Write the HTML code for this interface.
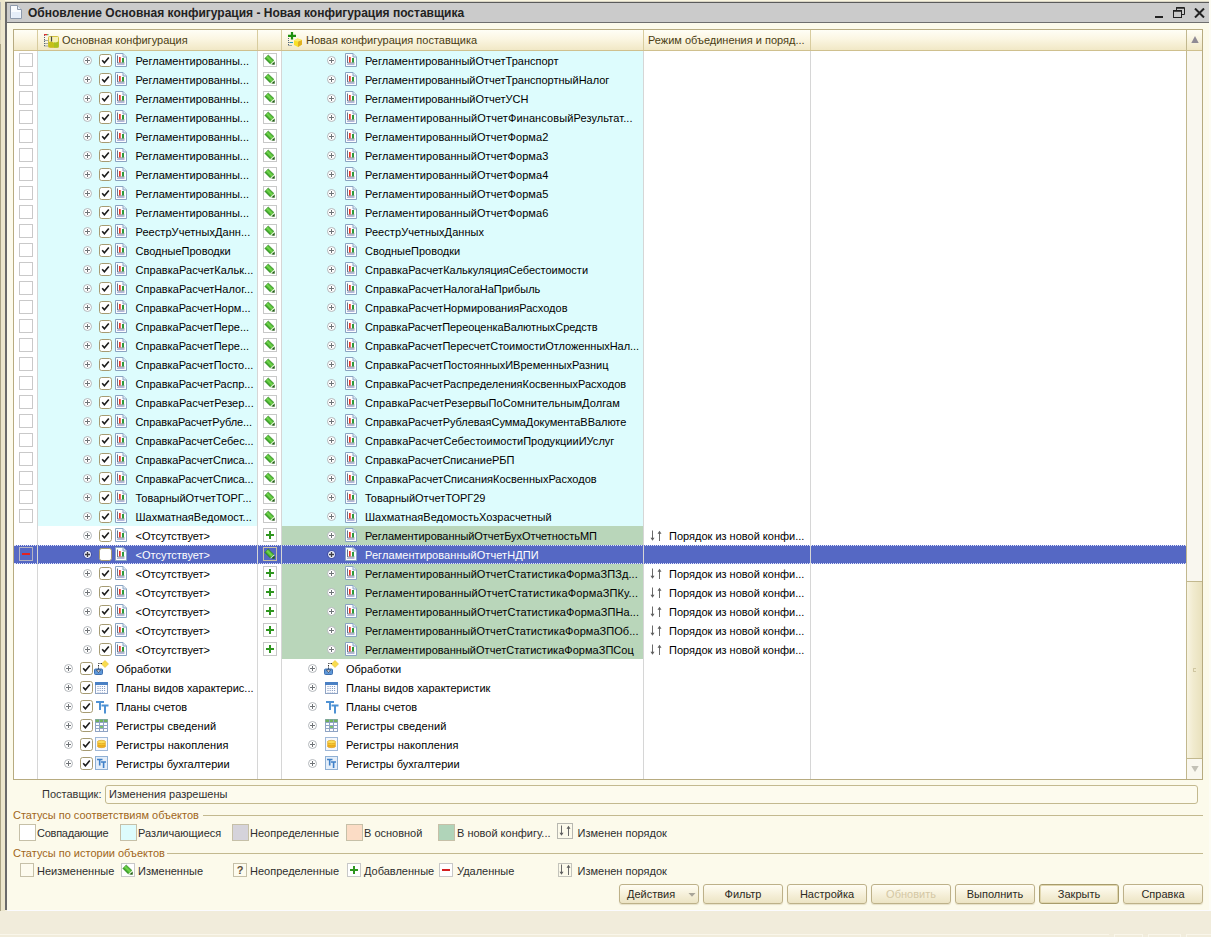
<!DOCTYPE html>
<html lang="ru"><head><meta charset="utf-8"><title>Обновление Основная конфигурация - Новая конфигурация поставщика</title>
<style>
html,body{margin:0;padding:0}
body{width:1211px;height:937px;overflow:hidden;position:relative;background:#f1ecdb;font-family:"Liberation Sans",sans-serif;font-size:11px;color:#000}
.a{position:absolute;display:block;line-height:0}
.a svg{display:block}
#lstrip{position:absolute;left:0;top:0;width:5px;height:911px;background:#ece6cc}
#lstrip2{position:absolute;left:0;top:2px;width:1px;height:909px;background:linear-gradient(#bcbcb8 0,#bcbcb8 18px,#dcd6bc 18px,#dcd6bc 42px,#aaa384 42px)}
#topstrip{position:absolute;left:0;top:0;width:1211px;height:3px;background:#f8f4df}
#win{position:absolute;left:5px;top:3px;width:1204px;height:907px;background:#fcfaeb;border-left:2px solid #6a6a6a;box-sizing:border-box}
#winb{position:absolute;left:7px;top:910px;width:1204px;height:1px;background:#fbfbff}
#rstrip{position:absolute;left:1209px;top:0;width:2px;height:911px;background:#fdfcf4}
#title{position:absolute;left:5px;top:2px;width:1204px;height:21px;background:#cbcbcb;border-top:1px solid #5a5a5a;border-bottom:1px solid #6e6e6e;border-left:2px solid #5a5a5a;border-left-color:#6a6a6a;box-sizing:border-box;box-shadow:0 -1px 0 #d8d4c4}
#title .tt{position:absolute;left:21px;top:1px;line-height:18px;font-size:12px;font-weight:bold;color:#222;white-space:nowrap}
#tbl{position:absolute;left:13px;top:29px;width:1190px;height:751px;border:1px solid #b7ab80;box-sizing:border-box;background:#fff}
#hdr{position:absolute;left:14px;top:30px;width:1172px;height:20px;background:linear-gradient(#fffef6,#fbf6e2 45%,#f1e8c6);border-bottom:1px solid #cfc08e}
.hs{position:absolute;top:30px;width:1px;height:20px;background:#d8cc9e}
.vs{position:absolute;top:51px;width:1px;height:728px;background:#d6d6d6}
.ht{position:absolute;top:30px;line-height:20px;color:#4a3d12;white-space:nowrap}
.bg{position:absolute;height:19px}
.blue{background:#ddfcfd}
.green{background:#b9d6ba}
.selbg{position:absolute;left:14px;width:1172px;height:19px;background:#5568c4;box-sizing:border-box;border-top:1px dotted #dfe4ff;border-bottom:1px dotted #dfe4ff}
.fbox{position:absolute;left:19px;width:14px;height:14px;box-sizing:border-box;border:1px solid #c9c9c9;background:#fff}
.t{position:absolute;line-height:19px;white-space:nowrap;color:#000;margin-top:1px}
.t.w{color:#fff}
#sb{position:absolute;left:1186px;top:30px;width:16px;height:749px;background:#f9f7ef;border-left:1px solid #c2b88e;box-sizing:border-box}
#sbup{position:absolute;left:1186px;top:30px;width:16px;height:21px;border-left:1px solid #c2b88e;border-bottom:1px solid #cfc08e;box-sizing:border-box;background:linear-gradient(#fffef6,#f1e8c6)}
#thumb{position:absolute;left:1187px;top:581px;width:15px;height:178px;background:linear-gradient(90deg,#f8f4e2,#f1ebcf 40%,#e9e1bd);border-top:1px solid #c2b88e;border-bottom:1px solid #c2b88e;box-sizing:border-box}
.lbl{position:absolute;white-space:nowrap;line-height:14px;color:#2e2e2e}
.grp{color:#a0661a}
.hl{position:absolute;height:1px;background:#c3b98f}
.lb{position:absolute;width:17px;height:17px;box-sizing:border-box;border:1px solid #c6c0a8}
.btn{position:absolute;top:884px;height:20px;box-sizing:border-box;border:1px solid #bdb189;border-radius:3px;background:linear-gradient(#fffdf3,#f5efd8 55%,#ece4c4);text-align:center;line-height:18px;color:#2c2a22;box-shadow:0 1px 1px #e6e0c8}
</style></head><body>
<svg width="0" height="0" style="position:absolute;left:0;top:0"><defs><linearGradient id="pg" x1="0" y1="1" x2="1" y2="0"><stop offset="0" stop-color="#1e6a10"/><stop offset="0.32" stop-color="#2f981f"/><stop offset="0.52" stop-color="#78dc50"/><stop offset="0.72" stop-color="#2f981f"/><stop offset="1" stop-color="#1e6a10"/></linearGradient></defs></svg><div id="topstrip"></div><div id="lstrip"></div><div id="lstrip2"></div><div id="rstrip"></div>
<div id="win"></div><div id="winb"></div>
<div id="title"><span class="a" style="left:3px;top:2px"><svg width="12" height="14" viewBox="0 0 12 14"><path d="M0.500 0.500h7l4 4v9h-11z" fill="#fafcff" stroke="#8e9aac"/><path d="M7.500 0.500v4h4" fill="#e4ecf6" stroke="#8e9aac"/><path d="M1.500 7h9v6h-9z" fill="#e6eef9"/></svg></span><span class="tt">Обновление Основная конфигурация - Новая конфигурация поставщика</span>
<i style="position:absolute;left:1148px;top:13px;width:8px;height:2px;background:#222"></i>
<svg style="position:absolute;left:1166px;top:4px" width="12" height="12" viewBox="0 0 12 12"><path d="M3.500 3.500v-3h8v7h-3" fill="none" stroke="#222"/><path d="M3 1h8" stroke="#222" stroke-width="1.500"/><rect x="0.500" y="3.500" width="8" height="7" fill="#cbcbcb" stroke="#222"/><path d="M0 4h9" stroke="#222" stroke-width="1.500"/></svg>
<svg style="position:absolute;left:1187px;top:5px" width="11" height="10" viewBox="0 0 11 10"><path d="M1 0.500l9 9M10 0.500l-9 9" stroke="#222" stroke-width="2"/></svg>
</div>
<div id="tbl"></div>
<div id="hdr"></div>
<div class="hs" style="left:37px"></div><div class="hs" style="left:257px"></div><div class="hs" style="left:281px"></div><div class="hs" style="left:643px"></div><div class="hs" style="left:810px"></div>
<span class="a" style="left:44px;top:32px"><svg width="16" height="16" viewBox="0 0 16 16"><path d="M0.500 3v11M0.500 8.500h3M0.500 11.500h3M0.500 14h3" stroke="#55667a" stroke-dasharray="1 1" fill="none"/><rect x="0" y="2" width="3" height="1.300" fill="#e03030"/><rect x="3" y="2.200" width="1.500" height="1" fill="#30a050"/><rect x="4.500" y="4.500" width="10" height="11" rx="1" fill="#f6f0b4" stroke="#d0c040"/><path d="M4.500 10.500c2-1.500 3-1 5 0s3 0 5-1v5.500h-10z" fill="#c4c018"/><path d="M10 10.200c2 0.800 3-0.200 4.500-0.700v6h-4.500z" fill="#a8c020"/><path d="M7.500 4.500v5" stroke="#444" stroke-width="1.200"/></svg></span><span class="ht" style="left:62px">Основная конфигурация</span>
<span class="a" style="left:287px;top:31px"><svg width="16" height="16" viewBox="0 0 16 16"><path d="M1.500 7v8M1.500 11.500h4M1.500 14.500h4" stroke="#55667a" stroke-dasharray="1 1" fill="none"/><path d="M3 11.500h3" stroke="#2098b0"/><path d="M1 4.900h8M5 1v7.500" stroke="#1e9010" stroke-width="2.200"/><path d="M7 9.500l3.500-2l4.500 1.500v4.500l-4 2.500l-4-2z" fill="#f8e028"/><path d="M11 10.500l4-1.500v4.500l-4 2.500z" fill="#e0b020"/><path d="M7 9.500l3.500-2l4.500 1.500l-4 1.500z" fill="#fbec70"/></svg></span><span class="ht" style="left:306px">Новая конфигурация поставщика</span>
<span class="ht" style="left:648px">Режим объединения и поряд...</span>
<div class="bg blue" style="top:51px;left:38px;width:219px"></div>
<div class="bg blue" style="top:51px;left:282px;width:361px"></div>
<div class="fbox" style="top:53px"></div>
<span class="a" style="left:82px;top:55px"><svg class="exp" width="11" height="11" viewBox="0 0 11 11"><circle cx="5.5" cy="5.5" r="4" fill="#fff" stroke="#b4b8bc" stroke-width="1"/><path d="M3 5.5h5M5.5 3v5" stroke="#707478" stroke-width="1"/></svg></span>
<span class="a" style="left:99px;top:54px"><svg class="chk" width="13" height="13" viewBox="0 0 13 13"><rect x="0.5" y="0.5" width="12" height="12" rx="2.2" ry="2.2" fill="#fff" stroke="#a69b72"/><path d="M3.2 6.2l2.2 2.600l4.400-5.200" fill="none" stroke="#1a1a1a" stroke-width="1.600"/></svg></span>
<span class="a" style="left:115px;top:53px"><svg class="ico" width="12" height="14" viewBox="0 0 12 14"><path d="M0.5 0.5h7.5l3.500 3.500v9.500h-11z" fill="#fcfdff" stroke="#8aa4c2"/><path d="M8 0.500v3.500h3.500" fill="#dfe8f2" stroke="#8aa4c2"/><path d="M2.500 2.500v7.500h7" fill="none" stroke="#66748c"/><rect x="4" y="4" width="1.700" height="5.500" fill="#ea3a2a"/><rect x="7" y="5" width="2" height="4.500" fill="#2f9a3a"/><path d="M2 11.500h7.500" stroke="#b4b6dc"/></svg></span>
<span class="t L" style="left:135.5px;top:51px">Регламентированны...</span>
<span class="a" style="left:263px;top:53px"><svg class="st" width="14" height="14" viewBox="0 0 14 14"><rect x="0.5" y="0.5" width="13" height="13" fill="#fff" stroke="#c8c8c8"/><path d="M5.200 1.900L11 7.500L7.300 11L1.800 5.400z" fill="url(#pg)" stroke="#2a7a18" stroke-width="0.5"/><path d="M11 7.500l0.700 0.700l-3.800 3.400l-0.600-0.600z" fill="#dcf8c8"/><path d="M11.700 8.600v3.200l-3.400-0.200z" fill="#1e5a10"/></svg></span>
<span class="a" style="left:326px;top:55px"><svg class="exp" width="11" height="11" viewBox="0 0 11 11"><circle cx="5.5" cy="5.5" r="4" fill="#fff" stroke="#b4b8bc" stroke-width="1"/><path d="M3 5.5h5M5.5 3v5" stroke="#707478" stroke-width="1"/></svg></span>
<span class="a" style="left:345px;top:53px"><svg class="ico" width="12" height="14" viewBox="0 0 12 14"><path d="M0.5 0.5h7.5l3.500 3.500v9.500h-11z" fill="#fcfdff" stroke="#8aa4c2"/><path d="M8 0.500v3.500h3.500" fill="#dfe8f2" stroke="#8aa4c2"/><path d="M2.500 2.500v7.500h7" fill="none" stroke="#66748c"/><rect x="4" y="4" width="1.700" height="5.500" fill="#ea3a2a"/><rect x="7" y="5" width="2" height="4.500" fill="#2f9a3a"/><path d="M2 11.500h7.500" stroke="#b4b6dc"/></svg></span>
<span class="t R" style="left:365px;top:51px">РегламентированныйОтчетТранспорт</span>
<div class="bg blue" style="top:70px;left:38px;width:219px"></div>
<div class="bg blue" style="top:70px;left:282px;width:361px"></div>
<div class="fbox" style="top:72px"></div>
<span class="a" style="left:82px;top:74px"><svg class="exp" width="11" height="11" viewBox="0 0 11 11"><circle cx="5.5" cy="5.5" r="4" fill="#fff" stroke="#b4b8bc" stroke-width="1"/><path d="M3 5.5h5M5.5 3v5" stroke="#707478" stroke-width="1"/></svg></span>
<span class="a" style="left:99px;top:73px"><svg class="chk" width="13" height="13" viewBox="0 0 13 13"><rect x="0.5" y="0.5" width="12" height="12" rx="2.2" ry="2.2" fill="#fff" stroke="#a69b72"/><path d="M3.2 6.2l2.2 2.600l4.400-5.200" fill="none" stroke="#1a1a1a" stroke-width="1.600"/></svg></span>
<span class="a" style="left:115px;top:72px"><svg class="ico" width="12" height="14" viewBox="0 0 12 14"><path d="M0.5 0.5h7.5l3.500 3.500v9.500h-11z" fill="#fcfdff" stroke="#8aa4c2"/><path d="M8 0.500v3.500h3.500" fill="#dfe8f2" stroke="#8aa4c2"/><path d="M2.500 2.500v7.500h7" fill="none" stroke="#66748c"/><rect x="4" y="4" width="1.700" height="5.500" fill="#ea3a2a"/><rect x="7" y="5" width="2" height="4.500" fill="#2f9a3a"/><path d="M2 11.500h7.500" stroke="#b4b6dc"/></svg></span>
<span class="t L" style="left:135.5px;top:70px">Регламентированны...</span>
<span class="a" style="left:263px;top:72px"><svg class="st" width="14" height="14" viewBox="0 0 14 14"><rect x="0.5" y="0.5" width="13" height="13" fill="#fff" stroke="#c8c8c8"/><path d="M5.200 1.900L11 7.500L7.300 11L1.800 5.400z" fill="url(#pg)" stroke="#2a7a18" stroke-width="0.5"/><path d="M11 7.500l0.700 0.700l-3.800 3.400l-0.600-0.600z" fill="#dcf8c8"/><path d="M11.700 8.600v3.200l-3.400-0.200z" fill="#1e5a10"/></svg></span>
<span class="a" style="left:326px;top:74px"><svg class="exp" width="11" height="11" viewBox="0 0 11 11"><circle cx="5.5" cy="5.5" r="4" fill="#fff" stroke="#b4b8bc" stroke-width="1"/><path d="M3 5.5h5M5.5 3v5" stroke="#707478" stroke-width="1"/></svg></span>
<span class="a" style="left:345px;top:72px"><svg class="ico" width="12" height="14" viewBox="0 0 12 14"><path d="M0.5 0.5h7.5l3.500 3.500v9.500h-11z" fill="#fcfdff" stroke="#8aa4c2"/><path d="M8 0.500v3.500h3.500" fill="#dfe8f2" stroke="#8aa4c2"/><path d="M2.500 2.500v7.500h7" fill="none" stroke="#66748c"/><rect x="4" y="4" width="1.700" height="5.500" fill="#ea3a2a"/><rect x="7" y="5" width="2" height="4.500" fill="#2f9a3a"/><path d="M2 11.500h7.500" stroke="#b4b6dc"/></svg></span>
<span class="t R" style="left:365px;top:70px">РегламентированныйОтчетТранспортныйНалог</span>
<div class="bg blue" style="top:89px;left:38px;width:219px"></div>
<div class="bg blue" style="top:89px;left:282px;width:361px"></div>
<div class="fbox" style="top:91px"></div>
<span class="a" style="left:82px;top:93px"><svg class="exp" width="11" height="11" viewBox="0 0 11 11"><circle cx="5.5" cy="5.5" r="4" fill="#fff" stroke="#b4b8bc" stroke-width="1"/><path d="M3 5.5h5M5.5 3v5" stroke="#707478" stroke-width="1"/></svg></span>
<span class="a" style="left:99px;top:92px"><svg class="chk" width="13" height="13" viewBox="0 0 13 13"><rect x="0.5" y="0.5" width="12" height="12" rx="2.2" ry="2.2" fill="#fff" stroke="#a69b72"/><path d="M3.2 6.2l2.2 2.600l4.400-5.200" fill="none" stroke="#1a1a1a" stroke-width="1.600"/></svg></span>
<span class="a" style="left:115px;top:91px"><svg class="ico" width="12" height="14" viewBox="0 0 12 14"><path d="M0.5 0.5h7.5l3.500 3.500v9.500h-11z" fill="#fcfdff" stroke="#8aa4c2"/><path d="M8 0.500v3.500h3.500" fill="#dfe8f2" stroke="#8aa4c2"/><path d="M2.500 2.500v7.500h7" fill="none" stroke="#66748c"/><rect x="4" y="4" width="1.700" height="5.500" fill="#ea3a2a"/><rect x="7" y="5" width="2" height="4.500" fill="#2f9a3a"/><path d="M2 11.500h7.500" stroke="#b4b6dc"/></svg></span>
<span class="t L" style="left:135.5px;top:89px">Регламентированны...</span>
<span class="a" style="left:263px;top:91px"><svg class="st" width="14" height="14" viewBox="0 0 14 14"><rect x="0.5" y="0.5" width="13" height="13" fill="#fff" stroke="#c8c8c8"/><path d="M5.200 1.900L11 7.500L7.300 11L1.800 5.400z" fill="url(#pg)" stroke="#2a7a18" stroke-width="0.5"/><path d="M11 7.500l0.700 0.700l-3.800 3.400l-0.600-0.600z" fill="#dcf8c8"/><path d="M11.700 8.600v3.200l-3.400-0.200z" fill="#1e5a10"/></svg></span>
<span class="a" style="left:326px;top:93px"><svg class="exp" width="11" height="11" viewBox="0 0 11 11"><circle cx="5.5" cy="5.5" r="4" fill="#fff" stroke="#b4b8bc" stroke-width="1"/><path d="M3 5.5h5M5.5 3v5" stroke="#707478" stroke-width="1"/></svg></span>
<span class="a" style="left:345px;top:91px"><svg class="ico" width="12" height="14" viewBox="0 0 12 14"><path d="M0.5 0.5h7.5l3.500 3.500v9.500h-11z" fill="#fcfdff" stroke="#8aa4c2"/><path d="M8 0.500v3.500h3.500" fill="#dfe8f2" stroke="#8aa4c2"/><path d="M2.500 2.500v7.500h7" fill="none" stroke="#66748c"/><rect x="4" y="4" width="1.700" height="5.500" fill="#ea3a2a"/><rect x="7" y="5" width="2" height="4.500" fill="#2f9a3a"/><path d="M2 11.500h7.500" stroke="#b4b6dc"/></svg></span>
<span class="t R" style="left:365px;top:89px">РегламентированныйОтчетУСН</span>
<div class="bg blue" style="top:108px;left:38px;width:219px"></div>
<div class="bg blue" style="top:108px;left:282px;width:361px"></div>
<div class="fbox" style="top:110px"></div>
<span class="a" style="left:82px;top:112px"><svg class="exp" width="11" height="11" viewBox="0 0 11 11"><circle cx="5.5" cy="5.5" r="4" fill="#fff" stroke="#b4b8bc" stroke-width="1"/><path d="M3 5.5h5M5.5 3v5" stroke="#707478" stroke-width="1"/></svg></span>
<span class="a" style="left:99px;top:111px"><svg class="chk" width="13" height="13" viewBox="0 0 13 13"><rect x="0.5" y="0.5" width="12" height="12" rx="2.2" ry="2.2" fill="#fff" stroke="#a69b72"/><path d="M3.2 6.2l2.2 2.600l4.400-5.200" fill="none" stroke="#1a1a1a" stroke-width="1.600"/></svg></span>
<span class="a" style="left:115px;top:110px"><svg class="ico" width="12" height="14" viewBox="0 0 12 14"><path d="M0.5 0.5h7.5l3.500 3.500v9.500h-11z" fill="#fcfdff" stroke="#8aa4c2"/><path d="M8 0.500v3.500h3.500" fill="#dfe8f2" stroke="#8aa4c2"/><path d="M2.500 2.500v7.500h7" fill="none" stroke="#66748c"/><rect x="4" y="4" width="1.700" height="5.500" fill="#ea3a2a"/><rect x="7" y="5" width="2" height="4.500" fill="#2f9a3a"/><path d="M2 11.500h7.500" stroke="#b4b6dc"/></svg></span>
<span class="t L" style="left:135.5px;top:108px">Регламентированны...</span>
<span class="a" style="left:263px;top:110px"><svg class="st" width="14" height="14" viewBox="0 0 14 14"><rect x="0.5" y="0.5" width="13" height="13" fill="#fff" stroke="#c8c8c8"/><path d="M5.200 1.900L11 7.500L7.300 11L1.800 5.400z" fill="url(#pg)" stroke="#2a7a18" stroke-width="0.5"/><path d="M11 7.500l0.700 0.700l-3.800 3.400l-0.600-0.600z" fill="#dcf8c8"/><path d="M11.700 8.600v3.200l-3.400-0.200z" fill="#1e5a10"/></svg></span>
<span class="a" style="left:326px;top:112px"><svg class="exp" width="11" height="11" viewBox="0 0 11 11"><circle cx="5.5" cy="5.5" r="4" fill="#fff" stroke="#b4b8bc" stroke-width="1"/><path d="M3 5.5h5M5.5 3v5" stroke="#707478" stroke-width="1"/></svg></span>
<span class="a" style="left:345px;top:110px"><svg class="ico" width="12" height="14" viewBox="0 0 12 14"><path d="M0.5 0.5h7.5l3.500 3.500v9.500h-11z" fill="#fcfdff" stroke="#8aa4c2"/><path d="M8 0.500v3.500h3.500" fill="#dfe8f2" stroke="#8aa4c2"/><path d="M2.500 2.500v7.500h7" fill="none" stroke="#66748c"/><rect x="4" y="4" width="1.700" height="5.500" fill="#ea3a2a"/><rect x="7" y="5" width="2" height="4.500" fill="#2f9a3a"/><path d="M2 11.500h7.500" stroke="#b4b6dc"/></svg></span>
<span class="t R" style="left:365px;top:108px;letter-spacing:0.104px">РегламентированныйОтчетФинансовыйРезультат...</span>
<div class="bg blue" style="top:127px;left:38px;width:219px"></div>
<div class="bg blue" style="top:127px;left:282px;width:361px"></div>
<div class="fbox" style="top:129px"></div>
<span class="a" style="left:82px;top:131px"><svg class="exp" width="11" height="11" viewBox="0 0 11 11"><circle cx="5.5" cy="5.5" r="4" fill="#fff" stroke="#b4b8bc" stroke-width="1"/><path d="M3 5.5h5M5.5 3v5" stroke="#707478" stroke-width="1"/></svg></span>
<span class="a" style="left:99px;top:130px"><svg class="chk" width="13" height="13" viewBox="0 0 13 13"><rect x="0.5" y="0.5" width="12" height="12" rx="2.2" ry="2.2" fill="#fff" stroke="#a69b72"/><path d="M3.2 6.2l2.2 2.600l4.400-5.200" fill="none" stroke="#1a1a1a" stroke-width="1.600"/></svg></span>
<span class="a" style="left:115px;top:129px"><svg class="ico" width="12" height="14" viewBox="0 0 12 14"><path d="M0.5 0.5h7.5l3.500 3.500v9.500h-11z" fill="#fcfdff" stroke="#8aa4c2"/><path d="M8 0.500v3.500h3.500" fill="#dfe8f2" stroke="#8aa4c2"/><path d="M2.500 2.500v7.500h7" fill="none" stroke="#66748c"/><rect x="4" y="4" width="1.700" height="5.500" fill="#ea3a2a"/><rect x="7" y="5" width="2" height="4.500" fill="#2f9a3a"/><path d="M2 11.500h7.500" stroke="#b4b6dc"/></svg></span>
<span class="t L" style="left:135.5px;top:127px">Регламентированны...</span>
<span class="a" style="left:263px;top:129px"><svg class="st" width="14" height="14" viewBox="0 0 14 14"><rect x="0.5" y="0.5" width="13" height="13" fill="#fff" stroke="#c8c8c8"/><path d="M5.200 1.900L11 7.500L7.300 11L1.800 5.400z" fill="url(#pg)" stroke="#2a7a18" stroke-width="0.5"/><path d="M11 7.500l0.700 0.700l-3.800 3.400l-0.600-0.600z" fill="#dcf8c8"/><path d="M11.700 8.600v3.200l-3.400-0.200z" fill="#1e5a10"/></svg></span>
<span class="a" style="left:326px;top:131px"><svg class="exp" width="11" height="11" viewBox="0 0 11 11"><circle cx="5.5" cy="5.5" r="4" fill="#fff" stroke="#b4b8bc" stroke-width="1"/><path d="M3 5.5h5M5.5 3v5" stroke="#707478" stroke-width="1"/></svg></span>
<span class="a" style="left:345px;top:129px"><svg class="ico" width="12" height="14" viewBox="0 0 12 14"><path d="M0.5 0.5h7.5l3.500 3.500v9.500h-11z" fill="#fcfdff" stroke="#8aa4c2"/><path d="M8 0.500v3.500h3.500" fill="#dfe8f2" stroke="#8aa4c2"/><path d="M2.500 2.500v7.500h7" fill="none" stroke="#66748c"/><rect x="4" y="4" width="1.700" height="5.500" fill="#ea3a2a"/><rect x="7" y="5" width="2" height="4.500" fill="#2f9a3a"/><path d="M2 11.500h7.500" stroke="#b4b6dc"/></svg></span>
<span class="t R" style="left:365px;top:127px;letter-spacing:0.083px">РегламентированныйОтчетФорма2</span>
<div class="bg blue" style="top:146px;left:38px;width:219px"></div>
<div class="bg blue" style="top:146px;left:282px;width:361px"></div>
<div class="fbox" style="top:148px"></div>
<span class="a" style="left:82px;top:150px"><svg class="exp" width="11" height="11" viewBox="0 0 11 11"><circle cx="5.5" cy="5.5" r="4" fill="#fff" stroke="#b4b8bc" stroke-width="1"/><path d="M3 5.5h5M5.5 3v5" stroke="#707478" stroke-width="1"/></svg></span>
<span class="a" style="left:99px;top:149px"><svg class="chk" width="13" height="13" viewBox="0 0 13 13"><rect x="0.5" y="0.5" width="12" height="12" rx="2.2" ry="2.2" fill="#fff" stroke="#a69b72"/><path d="M3.2 6.2l2.2 2.600l4.400-5.200" fill="none" stroke="#1a1a1a" stroke-width="1.600"/></svg></span>
<span class="a" style="left:115px;top:148px"><svg class="ico" width="12" height="14" viewBox="0 0 12 14"><path d="M0.5 0.5h7.5l3.500 3.500v9.500h-11z" fill="#fcfdff" stroke="#8aa4c2"/><path d="M8 0.500v3.500h3.500" fill="#dfe8f2" stroke="#8aa4c2"/><path d="M2.500 2.500v7.500h7" fill="none" stroke="#66748c"/><rect x="4" y="4" width="1.700" height="5.500" fill="#ea3a2a"/><rect x="7" y="5" width="2" height="4.500" fill="#2f9a3a"/><path d="M2 11.500h7.500" stroke="#b4b6dc"/></svg></span>
<span class="t L" style="left:135.5px;top:146px">Регламентированны...</span>
<span class="a" style="left:263px;top:148px"><svg class="st" width="14" height="14" viewBox="0 0 14 14"><rect x="0.5" y="0.5" width="13" height="13" fill="#fff" stroke="#c8c8c8"/><path d="M5.200 1.900L11 7.500L7.300 11L1.800 5.400z" fill="url(#pg)" stroke="#2a7a18" stroke-width="0.5"/><path d="M11 7.500l0.700 0.700l-3.800 3.400l-0.600-0.600z" fill="#dcf8c8"/><path d="M11.700 8.600v3.200l-3.400-0.200z" fill="#1e5a10"/></svg></span>
<span class="a" style="left:326px;top:150px"><svg class="exp" width="11" height="11" viewBox="0 0 11 11"><circle cx="5.5" cy="5.5" r="4" fill="#fff" stroke="#b4b8bc" stroke-width="1"/><path d="M3 5.5h5M5.5 3v5" stroke="#707478" stroke-width="1"/></svg></span>
<span class="a" style="left:345px;top:148px"><svg class="ico" width="12" height="14" viewBox="0 0 12 14"><path d="M0.5 0.5h7.5l3.500 3.500v9.500h-11z" fill="#fcfdff" stroke="#8aa4c2"/><path d="M8 0.500v3.500h3.500" fill="#dfe8f2" stroke="#8aa4c2"/><path d="M2.500 2.500v7.500h7" fill="none" stroke="#66748c"/><rect x="4" y="4" width="1.700" height="5.500" fill="#ea3a2a"/><rect x="7" y="5" width="2" height="4.500" fill="#2f9a3a"/><path d="M2 11.500h7.500" stroke="#b4b6dc"/></svg></span>
<span class="t R" style="left:365px;top:146px;letter-spacing:0.083px">РегламентированныйОтчетФорма3</span>
<div class="bg blue" style="top:165px;left:38px;width:219px"></div>
<div class="bg blue" style="top:165px;left:282px;width:361px"></div>
<div class="fbox" style="top:167px"></div>
<span class="a" style="left:82px;top:169px"><svg class="exp" width="11" height="11" viewBox="0 0 11 11"><circle cx="5.5" cy="5.5" r="4" fill="#fff" stroke="#b4b8bc" stroke-width="1"/><path d="M3 5.5h5M5.5 3v5" stroke="#707478" stroke-width="1"/></svg></span>
<span class="a" style="left:99px;top:168px"><svg class="chk" width="13" height="13" viewBox="0 0 13 13"><rect x="0.5" y="0.5" width="12" height="12" rx="2.2" ry="2.2" fill="#fff" stroke="#a69b72"/><path d="M3.2 6.2l2.2 2.600l4.400-5.200" fill="none" stroke="#1a1a1a" stroke-width="1.600"/></svg></span>
<span class="a" style="left:115px;top:167px"><svg class="ico" width="12" height="14" viewBox="0 0 12 14"><path d="M0.5 0.5h7.5l3.500 3.500v9.500h-11z" fill="#fcfdff" stroke="#8aa4c2"/><path d="M8 0.500v3.500h3.500" fill="#dfe8f2" stroke="#8aa4c2"/><path d="M2.500 2.500v7.500h7" fill="none" stroke="#66748c"/><rect x="4" y="4" width="1.700" height="5.500" fill="#ea3a2a"/><rect x="7" y="5" width="2" height="4.500" fill="#2f9a3a"/><path d="M2 11.500h7.500" stroke="#b4b6dc"/></svg></span>
<span class="t L" style="left:135.5px;top:165px">Регламентированны...</span>
<span class="a" style="left:263px;top:167px"><svg class="st" width="14" height="14" viewBox="0 0 14 14"><rect x="0.5" y="0.5" width="13" height="13" fill="#fff" stroke="#c8c8c8"/><path d="M5.200 1.900L11 7.500L7.300 11L1.800 5.400z" fill="url(#pg)" stroke="#2a7a18" stroke-width="0.5"/><path d="M11 7.500l0.700 0.700l-3.800 3.400l-0.600-0.600z" fill="#dcf8c8"/><path d="M11.700 8.600v3.200l-3.400-0.200z" fill="#1e5a10"/></svg></span>
<span class="a" style="left:326px;top:169px"><svg class="exp" width="11" height="11" viewBox="0 0 11 11"><circle cx="5.5" cy="5.5" r="4" fill="#fff" stroke="#b4b8bc" stroke-width="1"/><path d="M3 5.5h5M5.5 3v5" stroke="#707478" stroke-width="1"/></svg></span>
<span class="a" style="left:345px;top:167px"><svg class="ico" width="12" height="14" viewBox="0 0 12 14"><path d="M0.5 0.5h7.5l3.500 3.500v9.500h-11z" fill="#fcfdff" stroke="#8aa4c2"/><path d="M8 0.500v3.500h3.500" fill="#dfe8f2" stroke="#8aa4c2"/><path d="M2.500 2.500v7.500h7" fill="none" stroke="#66748c"/><rect x="4" y="4" width="1.700" height="5.500" fill="#ea3a2a"/><rect x="7" y="5" width="2" height="4.500" fill="#2f9a3a"/><path d="M2 11.500h7.500" stroke="#b4b6dc"/></svg></span>
<span class="t R" style="left:365px;top:165px;letter-spacing:0.083px">РегламентированныйОтчетФорма4</span>
<div class="bg blue" style="top:184px;left:38px;width:219px"></div>
<div class="bg blue" style="top:184px;left:282px;width:361px"></div>
<div class="fbox" style="top:186px"></div>
<span class="a" style="left:82px;top:188px"><svg class="exp" width="11" height="11" viewBox="0 0 11 11"><circle cx="5.5" cy="5.5" r="4" fill="#fff" stroke="#b4b8bc" stroke-width="1"/><path d="M3 5.5h5M5.5 3v5" stroke="#707478" stroke-width="1"/></svg></span>
<span class="a" style="left:99px;top:187px"><svg class="chk" width="13" height="13" viewBox="0 0 13 13"><rect x="0.5" y="0.5" width="12" height="12" rx="2.2" ry="2.2" fill="#fff" stroke="#a69b72"/><path d="M3.2 6.2l2.2 2.600l4.400-5.200" fill="none" stroke="#1a1a1a" stroke-width="1.600"/></svg></span>
<span class="a" style="left:115px;top:186px"><svg class="ico" width="12" height="14" viewBox="0 0 12 14"><path d="M0.5 0.5h7.5l3.500 3.500v9.500h-11z" fill="#fcfdff" stroke="#8aa4c2"/><path d="M8 0.500v3.500h3.500" fill="#dfe8f2" stroke="#8aa4c2"/><path d="M2.500 2.500v7.500h7" fill="none" stroke="#66748c"/><rect x="4" y="4" width="1.700" height="5.500" fill="#ea3a2a"/><rect x="7" y="5" width="2" height="4.500" fill="#2f9a3a"/><path d="M2 11.500h7.500" stroke="#b4b6dc"/></svg></span>
<span class="t L" style="left:135.5px;top:184px">Регламентированны...</span>
<span class="a" style="left:263px;top:186px"><svg class="st" width="14" height="14" viewBox="0 0 14 14"><rect x="0.5" y="0.5" width="13" height="13" fill="#fff" stroke="#c8c8c8"/><path d="M5.200 1.900L11 7.500L7.300 11L1.800 5.400z" fill="url(#pg)" stroke="#2a7a18" stroke-width="0.5"/><path d="M11 7.500l0.700 0.700l-3.800 3.400l-0.600-0.600z" fill="#dcf8c8"/><path d="M11.700 8.600v3.200l-3.400-0.200z" fill="#1e5a10"/></svg></span>
<span class="a" style="left:326px;top:188px"><svg class="exp" width="11" height="11" viewBox="0 0 11 11"><circle cx="5.5" cy="5.5" r="4" fill="#fff" stroke="#b4b8bc" stroke-width="1"/><path d="M3 5.5h5M5.5 3v5" stroke="#707478" stroke-width="1"/></svg></span>
<span class="a" style="left:345px;top:186px"><svg class="ico" width="12" height="14" viewBox="0 0 12 14"><path d="M0.5 0.5h7.5l3.500 3.500v9.500h-11z" fill="#fcfdff" stroke="#8aa4c2"/><path d="M8 0.500v3.500h3.500" fill="#dfe8f2" stroke="#8aa4c2"/><path d="M2.500 2.500v7.500h7" fill="none" stroke="#66748c"/><rect x="4" y="4" width="1.700" height="5.500" fill="#ea3a2a"/><rect x="7" y="5" width="2" height="4.500" fill="#2f9a3a"/><path d="M2 11.500h7.500" stroke="#b4b6dc"/></svg></span>
<span class="t R" style="left:365px;top:184px;letter-spacing:0.083px">РегламентированныйОтчетФорма5</span>
<div class="bg blue" style="top:203px;left:38px;width:219px"></div>
<div class="bg blue" style="top:203px;left:282px;width:361px"></div>
<div class="fbox" style="top:205px"></div>
<span class="a" style="left:82px;top:207px"><svg class="exp" width="11" height="11" viewBox="0 0 11 11"><circle cx="5.5" cy="5.5" r="4" fill="#fff" stroke="#b4b8bc" stroke-width="1"/><path d="M3 5.5h5M5.5 3v5" stroke="#707478" stroke-width="1"/></svg></span>
<span class="a" style="left:99px;top:206px"><svg class="chk" width="13" height="13" viewBox="0 0 13 13"><rect x="0.5" y="0.5" width="12" height="12" rx="2.2" ry="2.2" fill="#fff" stroke="#a69b72"/><path d="M3.2 6.2l2.2 2.600l4.400-5.200" fill="none" stroke="#1a1a1a" stroke-width="1.600"/></svg></span>
<span class="a" style="left:115px;top:205px"><svg class="ico" width="12" height="14" viewBox="0 0 12 14"><path d="M0.5 0.5h7.5l3.500 3.500v9.500h-11z" fill="#fcfdff" stroke="#8aa4c2"/><path d="M8 0.500v3.500h3.500" fill="#dfe8f2" stroke="#8aa4c2"/><path d="M2.500 2.500v7.500h7" fill="none" stroke="#66748c"/><rect x="4" y="4" width="1.700" height="5.500" fill="#ea3a2a"/><rect x="7" y="5" width="2" height="4.500" fill="#2f9a3a"/><path d="M2 11.500h7.500" stroke="#b4b6dc"/></svg></span>
<span class="t L" style="left:135.5px;top:203px">Регламентированны...</span>
<span class="a" style="left:263px;top:205px"><svg class="st" width="14" height="14" viewBox="0 0 14 14"><rect x="0.5" y="0.5" width="13" height="13" fill="#fff" stroke="#c8c8c8"/><path d="M5.200 1.900L11 7.500L7.300 11L1.800 5.400z" fill="url(#pg)" stroke="#2a7a18" stroke-width="0.5"/><path d="M11 7.500l0.700 0.700l-3.800 3.400l-0.600-0.600z" fill="#dcf8c8"/><path d="M11.700 8.600v3.200l-3.400-0.200z" fill="#1e5a10"/></svg></span>
<span class="a" style="left:326px;top:207px"><svg class="exp" width="11" height="11" viewBox="0 0 11 11"><circle cx="5.5" cy="5.5" r="4" fill="#fff" stroke="#b4b8bc" stroke-width="1"/><path d="M3 5.5h5M5.5 3v5" stroke="#707478" stroke-width="1"/></svg></span>
<span class="a" style="left:345px;top:205px"><svg class="ico" width="12" height="14" viewBox="0 0 12 14"><path d="M0.5 0.5h7.5l3.500 3.500v9.500h-11z" fill="#fcfdff" stroke="#8aa4c2"/><path d="M8 0.500v3.500h3.500" fill="#dfe8f2" stroke="#8aa4c2"/><path d="M2.500 2.500v7.500h7" fill="none" stroke="#66748c"/><rect x="4" y="4" width="1.700" height="5.500" fill="#ea3a2a"/><rect x="7" y="5" width="2" height="4.500" fill="#2f9a3a"/><path d="M2 11.500h7.500" stroke="#b4b6dc"/></svg></span>
<span class="t R" style="left:365px;top:203px;letter-spacing:0.083px">РегламентированныйОтчетФорма6</span>
<div class="bg blue" style="top:222px;left:38px;width:219px"></div>
<div class="bg blue" style="top:222px;left:282px;width:361px"></div>
<div class="fbox" style="top:224px"></div>
<span class="a" style="left:82px;top:226px"><svg class="exp" width="11" height="11" viewBox="0 0 11 11"><circle cx="5.5" cy="5.5" r="4" fill="#fff" stroke="#b4b8bc" stroke-width="1"/><path d="M3 5.5h5M5.5 3v5" stroke="#707478" stroke-width="1"/></svg></span>
<span class="a" style="left:99px;top:225px"><svg class="chk" width="13" height="13" viewBox="0 0 13 13"><rect x="0.5" y="0.5" width="12" height="12" rx="2.2" ry="2.2" fill="#fff" stroke="#a69b72"/><path d="M3.2 6.2l2.2 2.600l4.400-5.200" fill="none" stroke="#1a1a1a" stroke-width="1.600"/></svg></span>
<span class="a" style="left:115px;top:224px"><svg class="ico" width="12" height="14" viewBox="0 0 12 14"><path d="M0.5 0.5h7.5l3.500 3.500v9.500h-11z" fill="#fcfdff" stroke="#8aa4c2"/><path d="M8 0.500v3.500h3.500" fill="#dfe8f2" stroke="#8aa4c2"/><path d="M2.500 2.500v7.500h7" fill="none" stroke="#66748c"/><rect x="4" y="4" width="1.700" height="5.500" fill="#ea3a2a"/><rect x="7" y="5" width="2" height="4.500" fill="#2f9a3a"/><path d="M2 11.500h7.500" stroke="#b4b6dc"/></svg></span>
<span class="t L" style="left:135.5px;top:222px;letter-spacing:0.060px">РеестрУчетныхДанн...</span>
<span class="a" style="left:263px;top:224px"><svg class="st" width="14" height="14" viewBox="0 0 14 14"><rect x="0.5" y="0.5" width="13" height="13" fill="#fff" stroke="#c8c8c8"/><path d="M5.200 1.900L11 7.500L7.300 11L1.800 5.400z" fill="url(#pg)" stroke="#2a7a18" stroke-width="0.5"/><path d="M11 7.500l0.700 0.700l-3.800 3.400l-0.600-0.600z" fill="#dcf8c8"/><path d="M11.700 8.600v3.200l-3.400-0.200z" fill="#1e5a10"/></svg></span>
<span class="a" style="left:326px;top:226px"><svg class="exp" width="11" height="11" viewBox="0 0 11 11"><circle cx="5.5" cy="5.5" r="4" fill="#fff" stroke="#b4b8bc" stroke-width="1"/><path d="M3 5.5h5M5.5 3v5" stroke="#707478" stroke-width="1"/></svg></span>
<span class="a" style="left:345px;top:224px"><svg class="ico" width="12" height="14" viewBox="0 0 12 14"><path d="M0.5 0.5h7.5l3.500 3.500v9.500h-11z" fill="#fcfdff" stroke="#8aa4c2"/><path d="M8 0.500v3.500h3.500" fill="#dfe8f2" stroke="#8aa4c2"/><path d="M2.500 2.500v7.500h7" fill="none" stroke="#66748c"/><rect x="4" y="4" width="1.700" height="5.500" fill="#ea3a2a"/><rect x="7" y="5" width="2" height="4.500" fill="#2f9a3a"/><path d="M2 11.500h7.500" stroke="#b4b6dc"/></svg></span>
<span class="t R" style="left:365px;top:222px;letter-spacing:0.068px">РеестрУчетныхДанных</span>
<div class="bg blue" style="top:241px;left:38px;width:219px"></div>
<div class="bg blue" style="top:241px;left:282px;width:361px"></div>
<div class="fbox" style="top:243px"></div>
<span class="a" style="left:82px;top:245px"><svg class="exp" width="11" height="11" viewBox="0 0 11 11"><circle cx="5.5" cy="5.5" r="4" fill="#fff" stroke="#b4b8bc" stroke-width="1"/><path d="M3 5.5h5M5.5 3v5" stroke="#707478" stroke-width="1"/></svg></span>
<span class="a" style="left:99px;top:244px"><svg class="chk" width="13" height="13" viewBox="0 0 13 13"><rect x="0.5" y="0.5" width="12" height="12" rx="2.2" ry="2.2" fill="#fff" stroke="#a69b72"/><path d="M3.2 6.2l2.2 2.600l4.400-5.200" fill="none" stroke="#1a1a1a" stroke-width="1.600"/></svg></span>
<span class="a" style="left:115px;top:243px"><svg class="ico" width="12" height="14" viewBox="0 0 12 14"><path d="M0.5 0.5h7.5l3.500 3.500v9.500h-11z" fill="#fcfdff" stroke="#8aa4c2"/><path d="M8 0.500v3.500h3.500" fill="#dfe8f2" stroke="#8aa4c2"/><path d="M2.500 2.500v7.500h7" fill="none" stroke="#66748c"/><rect x="4" y="4" width="1.700" height="5.500" fill="#ea3a2a"/><rect x="7" y="5" width="2" height="4.500" fill="#2f9a3a"/><path d="M2 11.500h7.500" stroke="#b4b6dc"/></svg></span>
<span class="t L" style="left:135.5px;top:241px">СводныеПроводки</span>
<span class="a" style="left:263px;top:243px"><svg class="st" width="14" height="14" viewBox="0 0 14 14"><rect x="0.5" y="0.5" width="13" height="13" fill="#fff" stroke="#c8c8c8"/><path d="M5.200 1.900L11 7.500L7.300 11L1.800 5.400z" fill="url(#pg)" stroke="#2a7a18" stroke-width="0.5"/><path d="M11 7.500l0.700 0.700l-3.800 3.400l-0.600-0.600z" fill="#dcf8c8"/><path d="M11.700 8.600v3.200l-3.400-0.200z" fill="#1e5a10"/></svg></span>
<span class="a" style="left:326px;top:245px"><svg class="exp" width="11" height="11" viewBox="0 0 11 11"><circle cx="5.5" cy="5.5" r="4" fill="#fff" stroke="#b4b8bc" stroke-width="1"/><path d="M3 5.5h5M5.5 3v5" stroke="#707478" stroke-width="1"/></svg></span>
<span class="a" style="left:345px;top:243px"><svg class="ico" width="12" height="14" viewBox="0 0 12 14"><path d="M0.5 0.5h7.5l3.500 3.500v9.500h-11z" fill="#fcfdff" stroke="#8aa4c2"/><path d="M8 0.500v3.500h3.500" fill="#dfe8f2" stroke="#8aa4c2"/><path d="M2.500 2.500v7.500h7" fill="none" stroke="#66748c"/><rect x="4" y="4" width="1.700" height="5.500" fill="#ea3a2a"/><rect x="7" y="5" width="2" height="4.500" fill="#2f9a3a"/><path d="M2 11.500h7.500" stroke="#b4b6dc"/></svg></span>
<span class="t R" style="left:365px;top:241px">СводныеПроводки</span>
<div class="bg blue" style="top:260px;left:38px;width:219px"></div>
<div class="bg blue" style="top:260px;left:282px;width:361px"></div>
<div class="fbox" style="top:262px"></div>
<span class="a" style="left:82px;top:264px"><svg class="exp" width="11" height="11" viewBox="0 0 11 11"><circle cx="5.5" cy="5.5" r="4" fill="#fff" stroke="#b4b8bc" stroke-width="1"/><path d="M3 5.5h5M5.5 3v5" stroke="#707478" stroke-width="1"/></svg></span>
<span class="a" style="left:99px;top:263px"><svg class="chk" width="13" height="13" viewBox="0 0 13 13"><rect x="0.5" y="0.5" width="12" height="12" rx="2.2" ry="2.2" fill="#fff" stroke="#a69b72"/><path d="M3.2 6.2l2.2 2.600l4.400-5.200" fill="none" stroke="#1a1a1a" stroke-width="1.600"/></svg></span>
<span class="a" style="left:115px;top:262px"><svg class="ico" width="12" height="14" viewBox="0 0 12 14"><path d="M0.5 0.5h7.5l3.500 3.500v9.500h-11z" fill="#fcfdff" stroke="#8aa4c2"/><path d="M8 0.500v3.500h3.500" fill="#dfe8f2" stroke="#8aa4c2"/><path d="M2.500 2.500v7.500h7" fill="none" stroke="#66748c"/><rect x="4" y="4" width="1.700" height="5.500" fill="#ea3a2a"/><rect x="7" y="5" width="2" height="4.500" fill="#2f9a3a"/><path d="M2 11.500h7.500" stroke="#b4b6dc"/></svg></span>
<span class="t L" style="left:135.5px;top:260px;letter-spacing:0.052px">СправкаРасчетКальк...</span>
<span class="a" style="left:263px;top:262px"><svg class="st" width="14" height="14" viewBox="0 0 14 14"><rect x="0.5" y="0.5" width="13" height="13" fill="#fff" stroke="#c8c8c8"/><path d="M5.200 1.900L11 7.500L7.300 11L1.800 5.400z" fill="url(#pg)" stroke="#2a7a18" stroke-width="0.5"/><path d="M11 7.500l0.700 0.700l-3.800 3.400l-0.600-0.600z" fill="#dcf8c8"/><path d="M11.700 8.600v3.200l-3.400-0.200z" fill="#1e5a10"/></svg></span>
<span class="a" style="left:326px;top:264px"><svg class="exp" width="11" height="11" viewBox="0 0 11 11"><circle cx="5.5" cy="5.5" r="4" fill="#fff" stroke="#b4b8bc" stroke-width="1"/><path d="M3 5.5h5M5.5 3v5" stroke="#707478" stroke-width="1"/></svg></span>
<span class="a" style="left:345px;top:262px"><svg class="ico" width="12" height="14" viewBox="0 0 12 14"><path d="M0.5 0.5h7.5l3.500 3.500v9.500h-11z" fill="#fcfdff" stroke="#8aa4c2"/><path d="M8 0.500v3.500h3.500" fill="#dfe8f2" stroke="#8aa4c2"/><path d="M2.500 2.500v7.500h7" fill="none" stroke="#66748c"/><rect x="4" y="4" width="1.700" height="5.500" fill="#ea3a2a"/><rect x="7" y="5" width="2" height="4.500" fill="#2f9a3a"/><path d="M2 11.500h7.500" stroke="#b4b6dc"/></svg></span>
<span class="t R" style="left:365px;top:260px">СправкаРасчетКалькуляцияСебестоимости</span>
<div class="bg blue" style="top:279px;left:38px;width:219px"></div>
<div class="bg blue" style="top:279px;left:282px;width:361px"></div>
<div class="fbox" style="top:281px"></div>
<span class="a" style="left:82px;top:283px"><svg class="exp" width="11" height="11" viewBox="0 0 11 11"><circle cx="5.5" cy="5.5" r="4" fill="#fff" stroke="#b4b8bc" stroke-width="1"/><path d="M3 5.5h5M5.5 3v5" stroke="#707478" stroke-width="1"/></svg></span>
<span class="a" style="left:99px;top:282px"><svg class="chk" width="13" height="13" viewBox="0 0 13 13"><rect x="0.5" y="0.5" width="12" height="12" rx="2.2" ry="2.2" fill="#fff" stroke="#a69b72"/><path d="M3.2 6.2l2.2 2.600l4.400-5.200" fill="none" stroke="#1a1a1a" stroke-width="1.600"/></svg></span>
<span class="a" style="left:115px;top:281px"><svg class="ico" width="12" height="14" viewBox="0 0 12 14"><path d="M0.5 0.5h7.5l3.500 3.500v9.500h-11z" fill="#fcfdff" stroke="#8aa4c2"/><path d="M8 0.500v3.500h3.500" fill="#dfe8f2" stroke="#8aa4c2"/><path d="M2.500 2.500v7.500h7" fill="none" stroke="#66748c"/><rect x="4" y="4" width="1.700" height="5.500" fill="#ea3a2a"/><rect x="7" y="5" width="2" height="4.500" fill="#2f9a3a"/><path d="M2 11.500h7.500" stroke="#b4b6dc"/></svg></span>
<span class="t L" style="left:135.5px;top:279px;letter-spacing:0.052px">СправкаРасчетНалог...</span>
<span class="a" style="left:263px;top:281px"><svg class="st" width="14" height="14" viewBox="0 0 14 14"><rect x="0.5" y="0.5" width="13" height="13" fill="#fff" stroke="#c8c8c8"/><path d="M5.200 1.900L11 7.500L7.300 11L1.800 5.400z" fill="url(#pg)" stroke="#2a7a18" stroke-width="0.5"/><path d="M11 7.500l0.700 0.700l-3.800 3.400l-0.600-0.600z" fill="#dcf8c8"/><path d="M11.700 8.600v3.200l-3.400-0.200z" fill="#1e5a10"/></svg></span>
<span class="a" style="left:326px;top:283px"><svg class="exp" width="11" height="11" viewBox="0 0 11 11"><circle cx="5.5" cy="5.5" r="4" fill="#fff" stroke="#b4b8bc" stroke-width="1"/><path d="M3 5.5h5M5.5 3v5" stroke="#707478" stroke-width="1"/></svg></span>
<span class="a" style="left:345px;top:281px"><svg class="ico" width="12" height="14" viewBox="0 0 12 14"><path d="M0.5 0.5h7.5l3.500 3.500v9.500h-11z" fill="#fcfdff" stroke="#8aa4c2"/><path d="M8 0.500v3.500h3.500" fill="#dfe8f2" stroke="#8aa4c2"/><path d="M2.500 2.500v7.500h7" fill="none" stroke="#66748c"/><rect x="4" y="4" width="1.700" height="5.500" fill="#ea3a2a"/><rect x="7" y="5" width="2" height="4.500" fill="#2f9a3a"/><path d="M2 11.500h7.500" stroke="#b4b6dc"/></svg></span>
<span class="t R" style="left:365px;top:279px">СправкаРасчетНалогаНаПрибыль</span>
<div class="bg blue" style="top:298px;left:38px;width:219px"></div>
<div class="bg blue" style="top:298px;left:282px;width:361px"></div>
<div class="fbox" style="top:300px"></div>
<span class="a" style="left:82px;top:302px"><svg class="exp" width="11" height="11" viewBox="0 0 11 11"><circle cx="5.5" cy="5.5" r="4" fill="#fff" stroke="#b4b8bc" stroke-width="1"/><path d="M3 5.5h5M5.5 3v5" stroke="#707478" stroke-width="1"/></svg></span>
<span class="a" style="left:99px;top:301px"><svg class="chk" width="13" height="13" viewBox="0 0 13 13"><rect x="0.5" y="0.5" width="12" height="12" rx="2.2" ry="2.2" fill="#fff" stroke="#a69b72"/><path d="M3.2 6.2l2.2 2.600l4.400-5.200" fill="none" stroke="#1a1a1a" stroke-width="1.600"/></svg></span>
<span class="a" style="left:115px;top:300px"><svg class="ico" width="12" height="14" viewBox="0 0 12 14"><path d="M0.5 0.5h7.5l3.500 3.500v9.500h-11z" fill="#fcfdff" stroke="#8aa4c2"/><path d="M8 0.500v3.500h3.500" fill="#dfe8f2" stroke="#8aa4c2"/><path d="M2.500 2.500v7.500h7" fill="none" stroke="#66748c"/><rect x="4" y="4" width="1.700" height="5.500" fill="#ea3a2a"/><rect x="7" y="5" width="2" height="4.500" fill="#2f9a3a"/><path d="M2 11.500h7.500" stroke="#b4b6dc"/></svg></span>
<span class="t L" style="left:135.5px;top:298px">СправкаРасчетНорм...</span>
<span class="a" style="left:263px;top:300px"><svg class="st" width="14" height="14" viewBox="0 0 14 14"><rect x="0.5" y="0.5" width="13" height="13" fill="#fff" stroke="#c8c8c8"/><path d="M5.200 1.900L11 7.500L7.300 11L1.800 5.400z" fill="url(#pg)" stroke="#2a7a18" stroke-width="0.5"/><path d="M11 7.500l0.700 0.700l-3.800 3.400l-0.600-0.600z" fill="#dcf8c8"/><path d="M11.700 8.600v3.200l-3.400-0.200z" fill="#1e5a10"/></svg></span>
<span class="a" style="left:326px;top:302px"><svg class="exp" width="11" height="11" viewBox="0 0 11 11"><circle cx="5.5" cy="5.5" r="4" fill="#fff" stroke="#b4b8bc" stroke-width="1"/><path d="M3 5.5h5M5.5 3v5" stroke="#707478" stroke-width="1"/></svg></span>
<span class="a" style="left:345px;top:300px"><svg class="ico" width="12" height="14" viewBox="0 0 12 14"><path d="M0.5 0.5h7.5l3.500 3.500v9.500h-11z" fill="#fcfdff" stroke="#8aa4c2"/><path d="M8 0.500v3.500h3.500" fill="#dfe8f2" stroke="#8aa4c2"/><path d="M2.500 2.500v7.500h7" fill="none" stroke="#66748c"/><rect x="4" y="4" width="1.700" height="5.500" fill="#ea3a2a"/><rect x="7" y="5" width="2" height="4.500" fill="#2f9a3a"/><path d="M2 11.500h7.500" stroke="#b4b6dc"/></svg></span>
<span class="t R" style="left:365px;top:298px">СправкаРасчетНормированияРасходов</span>
<div class="bg blue" style="top:317px;left:38px;width:219px"></div>
<div class="bg blue" style="top:317px;left:282px;width:361px"></div>
<div class="fbox" style="top:319px"></div>
<span class="a" style="left:82px;top:321px"><svg class="exp" width="11" height="11" viewBox="0 0 11 11"><circle cx="5.5" cy="5.5" r="4" fill="#fff" stroke="#b4b8bc" stroke-width="1"/><path d="M3 5.5h5M5.5 3v5" stroke="#707478" stroke-width="1"/></svg></span>
<span class="a" style="left:99px;top:320px"><svg class="chk" width="13" height="13" viewBox="0 0 13 13"><rect x="0.5" y="0.5" width="12" height="12" rx="2.2" ry="2.2" fill="#fff" stroke="#a69b72"/><path d="M3.2 6.2l2.2 2.600l4.400-5.200" fill="none" stroke="#1a1a1a" stroke-width="1.600"/></svg></span>
<span class="a" style="left:115px;top:319px"><svg class="ico" width="12" height="14" viewBox="0 0 12 14"><path d="M0.5 0.5h7.5l3.500 3.500v9.500h-11z" fill="#fcfdff" stroke="#8aa4c2"/><path d="M8 0.500v3.500h3.500" fill="#dfe8f2" stroke="#8aa4c2"/><path d="M2.500 2.500v7.500h7" fill="none" stroke="#66748c"/><rect x="4" y="4" width="1.700" height="5.500" fill="#ea3a2a"/><rect x="7" y="5" width="2" height="4.500" fill="#2f9a3a"/><path d="M2 11.500h7.500" stroke="#b4b6dc"/></svg></span>
<span class="t L" style="left:135.5px;top:317px">СправкаРасчетПере...</span>
<span class="a" style="left:263px;top:319px"><svg class="st" width="14" height="14" viewBox="0 0 14 14"><rect x="0.5" y="0.5" width="13" height="13" fill="#fff" stroke="#c8c8c8"/><path d="M5.200 1.900L11 7.500L7.300 11L1.800 5.400z" fill="url(#pg)" stroke="#2a7a18" stroke-width="0.5"/><path d="M11 7.500l0.700 0.700l-3.800 3.400l-0.600-0.600z" fill="#dcf8c8"/><path d="M11.700 8.600v3.200l-3.400-0.200z" fill="#1e5a10"/></svg></span>
<span class="a" style="left:326px;top:321px"><svg class="exp" width="11" height="11" viewBox="0 0 11 11"><circle cx="5.5" cy="5.5" r="4" fill="#fff" stroke="#b4b8bc" stroke-width="1"/><path d="M3 5.5h5M5.5 3v5" stroke="#707478" stroke-width="1"/></svg></span>
<span class="a" style="left:345px;top:319px"><svg class="ico" width="12" height="14" viewBox="0 0 12 14"><path d="M0.5 0.5h7.5l3.500 3.500v9.500h-11z" fill="#fcfdff" stroke="#8aa4c2"/><path d="M8 0.500v3.500h3.500" fill="#dfe8f2" stroke="#8aa4c2"/><path d="M2.500 2.500v7.500h7" fill="none" stroke="#66748c"/><rect x="4" y="4" width="1.700" height="5.500" fill="#ea3a2a"/><rect x="7" y="5" width="2" height="4.500" fill="#2f9a3a"/><path d="M2 11.500h7.500" stroke="#b4b6dc"/></svg></span>
<span class="t R" style="left:365px;top:317px;letter-spacing:-0.071px">СправкаРасчетПереоценкаВалютныхСредств</span>
<div class="bg blue" style="top:336px;left:38px;width:219px"></div>
<div class="bg blue" style="top:336px;left:282px;width:361px"></div>
<div class="fbox" style="top:338px"></div>
<span class="a" style="left:82px;top:340px"><svg class="exp" width="11" height="11" viewBox="0 0 11 11"><circle cx="5.5" cy="5.5" r="4" fill="#fff" stroke="#b4b8bc" stroke-width="1"/><path d="M3 5.5h5M5.5 3v5" stroke="#707478" stroke-width="1"/></svg></span>
<span class="a" style="left:99px;top:339px"><svg class="chk" width="13" height="13" viewBox="0 0 13 13"><rect x="0.5" y="0.5" width="12" height="12" rx="2.2" ry="2.2" fill="#fff" stroke="#a69b72"/><path d="M3.2 6.2l2.2 2.600l4.400-5.200" fill="none" stroke="#1a1a1a" stroke-width="1.600"/></svg></span>
<span class="a" style="left:115px;top:338px"><svg class="ico" width="12" height="14" viewBox="0 0 12 14"><path d="M0.5 0.5h7.5l3.500 3.500v9.500h-11z" fill="#fcfdff" stroke="#8aa4c2"/><path d="M8 0.500v3.500h3.500" fill="#dfe8f2" stroke="#8aa4c2"/><path d="M2.500 2.500v7.500h7" fill="none" stroke="#66748c"/><rect x="4" y="4" width="1.700" height="5.500" fill="#ea3a2a"/><rect x="7" y="5" width="2" height="4.500" fill="#2f9a3a"/><path d="M2 11.500h7.500" stroke="#b4b6dc"/></svg></span>
<span class="t L" style="left:135.5px;top:336px">СправкаРасчетПере...</span>
<span class="a" style="left:263px;top:338px"><svg class="st" width="14" height="14" viewBox="0 0 14 14"><rect x="0.5" y="0.5" width="13" height="13" fill="#fff" stroke="#c8c8c8"/><path d="M5.200 1.900L11 7.500L7.300 11L1.800 5.400z" fill="url(#pg)" stroke="#2a7a18" stroke-width="0.5"/><path d="M11 7.500l0.700 0.700l-3.800 3.400l-0.600-0.600z" fill="#dcf8c8"/><path d="M11.700 8.600v3.200l-3.400-0.200z" fill="#1e5a10"/></svg></span>
<span class="a" style="left:326px;top:340px"><svg class="exp" width="11" height="11" viewBox="0 0 11 11"><circle cx="5.5" cy="5.5" r="4" fill="#fff" stroke="#b4b8bc" stroke-width="1"/><path d="M3 5.5h5M5.5 3v5" stroke="#707478" stroke-width="1"/></svg></span>
<span class="a" style="left:345px;top:338px"><svg class="ico" width="12" height="14" viewBox="0 0 12 14"><path d="M0.5 0.5h7.5l3.500 3.500v9.500h-11z" fill="#fcfdff" stroke="#8aa4c2"/><path d="M8 0.500v3.500h3.500" fill="#dfe8f2" stroke="#8aa4c2"/><path d="M2.500 2.500v7.500h7" fill="none" stroke="#66748c"/><rect x="4" y="4" width="1.700" height="5.500" fill="#ea3a2a"/><rect x="7" y="5" width="2" height="4.500" fill="#2f9a3a"/><path d="M2 11.500h7.500" stroke="#b4b6dc"/></svg></span>
<span class="t R" style="left:365px;top:336px;letter-spacing:-0.050px">СправкаРасчетПересчетСтоимостиОтложенныхНал...</span>
<div class="bg blue" style="top:355px;left:38px;width:219px"></div>
<div class="bg blue" style="top:355px;left:282px;width:361px"></div>
<div class="fbox" style="top:357px"></div>
<span class="a" style="left:82px;top:359px"><svg class="exp" width="11" height="11" viewBox="0 0 11 11"><circle cx="5.5" cy="5.5" r="4" fill="#fff" stroke="#b4b8bc" stroke-width="1"/><path d="M3 5.5h5M5.5 3v5" stroke="#707478" stroke-width="1"/></svg></span>
<span class="a" style="left:99px;top:358px"><svg class="chk" width="13" height="13" viewBox="0 0 13 13"><rect x="0.5" y="0.5" width="12" height="12" rx="2.2" ry="2.2" fill="#fff" stroke="#a69b72"/><path d="M3.2 6.2l2.2 2.600l4.400-5.200" fill="none" stroke="#1a1a1a" stroke-width="1.600"/></svg></span>
<span class="a" style="left:115px;top:357px"><svg class="ico" width="12" height="14" viewBox="0 0 12 14"><path d="M0.5 0.5h7.5l3.500 3.500v9.500h-11z" fill="#fcfdff" stroke="#8aa4c2"/><path d="M8 0.500v3.500h3.500" fill="#dfe8f2" stroke="#8aa4c2"/><path d="M2.500 2.500v7.500h7" fill="none" stroke="#66748c"/><rect x="4" y="4" width="1.700" height="5.500" fill="#ea3a2a"/><rect x="7" y="5" width="2" height="4.500" fill="#2f9a3a"/><path d="M2 11.500h7.500" stroke="#b4b6dc"/></svg></span>
<span class="t L" style="left:135.5px;top:355px">СправкаРасчетПосто...</span>
<span class="a" style="left:263px;top:357px"><svg class="st" width="14" height="14" viewBox="0 0 14 14"><rect x="0.5" y="0.5" width="13" height="13" fill="#fff" stroke="#c8c8c8"/><path d="M5.200 1.900L11 7.500L7.300 11L1.800 5.400z" fill="url(#pg)" stroke="#2a7a18" stroke-width="0.5"/><path d="M11 7.500l0.700 0.700l-3.800 3.400l-0.600-0.600z" fill="#dcf8c8"/><path d="M11.700 8.600v3.200l-3.400-0.200z" fill="#1e5a10"/></svg></span>
<span class="a" style="left:326px;top:359px"><svg class="exp" width="11" height="11" viewBox="0 0 11 11"><circle cx="5.5" cy="5.5" r="4" fill="#fff" stroke="#b4b8bc" stroke-width="1"/><path d="M3 5.5h5M5.5 3v5" stroke="#707478" stroke-width="1"/></svg></span>
<span class="a" style="left:345px;top:357px"><svg class="ico" width="12" height="14" viewBox="0 0 12 14"><path d="M0.5 0.5h7.5l3.500 3.500v9.500h-11z" fill="#fcfdff" stroke="#8aa4c2"/><path d="M8 0.500v3.500h3.500" fill="#dfe8f2" stroke="#8aa4c2"/><path d="M2.500 2.500v7.500h7" fill="none" stroke="#66748c"/><rect x="4" y="4" width="1.700" height="5.500" fill="#ea3a2a"/><rect x="7" y="5" width="2" height="4.500" fill="#2f9a3a"/><path d="M2 11.500h7.500" stroke="#b4b6dc"/></svg></span>
<span class="t R" style="left:365px;top:355px">СправкаРасчетПостоянныхИВременныхРазниц</span>
<div class="bg blue" style="top:374px;left:38px;width:219px"></div>
<div class="bg blue" style="top:374px;left:282px;width:361px"></div>
<div class="fbox" style="top:376px"></div>
<span class="a" style="left:82px;top:378px"><svg class="exp" width="11" height="11" viewBox="0 0 11 11"><circle cx="5.5" cy="5.5" r="4" fill="#fff" stroke="#b4b8bc" stroke-width="1"/><path d="M3 5.5h5M5.5 3v5" stroke="#707478" stroke-width="1"/></svg></span>
<span class="a" style="left:99px;top:377px"><svg class="chk" width="13" height="13" viewBox="0 0 13 13"><rect x="0.5" y="0.5" width="12" height="12" rx="2.2" ry="2.2" fill="#fff" stroke="#a69b72"/><path d="M3.2 6.2l2.2 2.600l4.400-5.200" fill="none" stroke="#1a1a1a" stroke-width="1.600"/></svg></span>
<span class="a" style="left:115px;top:376px"><svg class="ico" width="12" height="14" viewBox="0 0 12 14"><path d="M0.5 0.5h7.5l3.500 3.500v9.500h-11z" fill="#fcfdff" stroke="#8aa4c2"/><path d="M8 0.500v3.500h3.500" fill="#dfe8f2" stroke="#8aa4c2"/><path d="M2.500 2.500v7.500h7" fill="none" stroke="#66748c"/><rect x="4" y="4" width="1.700" height="5.500" fill="#ea3a2a"/><rect x="7" y="5" width="2" height="4.500" fill="#2f9a3a"/><path d="M2 11.500h7.500" stroke="#b4b6dc"/></svg></span>
<span class="t L" style="left:135.5px;top:374px">СправкаРасчетРаспр...</span>
<span class="a" style="left:263px;top:376px"><svg class="st" width="14" height="14" viewBox="0 0 14 14"><rect x="0.5" y="0.5" width="13" height="13" fill="#fff" stroke="#c8c8c8"/><path d="M5.200 1.900L11 7.500L7.300 11L1.800 5.400z" fill="url(#pg)" stroke="#2a7a18" stroke-width="0.5"/><path d="M11 7.500l0.700 0.700l-3.800 3.400l-0.600-0.600z" fill="#dcf8c8"/><path d="M11.700 8.600v3.200l-3.400-0.200z" fill="#1e5a10"/></svg></span>
<span class="a" style="left:326px;top:378px"><svg class="exp" width="11" height="11" viewBox="0 0 11 11"><circle cx="5.5" cy="5.5" r="4" fill="#fff" stroke="#b4b8bc" stroke-width="1"/><path d="M3 5.5h5M5.5 3v5" stroke="#707478" stroke-width="1"/></svg></span>
<span class="a" style="left:345px;top:376px"><svg class="ico" width="12" height="14" viewBox="0 0 12 14"><path d="M0.5 0.5h7.5l3.500 3.500v9.500h-11z" fill="#fcfdff" stroke="#8aa4c2"/><path d="M8 0.500v3.500h3.500" fill="#dfe8f2" stroke="#8aa4c2"/><path d="M2.500 2.500v7.500h7" fill="none" stroke="#66748c"/><rect x="4" y="4" width="1.700" height="5.500" fill="#ea3a2a"/><rect x="7" y="5" width="2" height="4.500" fill="#2f9a3a"/><path d="M2 11.500h7.500" stroke="#b4b6dc"/></svg></span>
<span class="t R" style="left:365px;top:374px">СправкаРасчетРаспределенияКосвенныхРасходов</span>
<div class="bg blue" style="top:393px;left:38px;width:219px"></div>
<div class="bg blue" style="top:393px;left:282px;width:361px"></div>
<div class="fbox" style="top:395px"></div>
<span class="a" style="left:82px;top:397px"><svg class="exp" width="11" height="11" viewBox="0 0 11 11"><circle cx="5.5" cy="5.5" r="4" fill="#fff" stroke="#b4b8bc" stroke-width="1"/><path d="M3 5.5h5M5.5 3v5" stroke="#707478" stroke-width="1"/></svg></span>
<span class="a" style="left:99px;top:396px"><svg class="chk" width="13" height="13" viewBox="0 0 13 13"><rect x="0.5" y="0.5" width="12" height="12" rx="2.2" ry="2.2" fill="#fff" stroke="#a69b72"/><path d="M3.2 6.2l2.2 2.600l4.400-5.200" fill="none" stroke="#1a1a1a" stroke-width="1.600"/></svg></span>
<span class="a" style="left:115px;top:395px"><svg class="ico" width="12" height="14" viewBox="0 0 12 14"><path d="M0.5 0.5h7.5l3.500 3.500v9.500h-11z" fill="#fcfdff" stroke="#8aa4c2"/><path d="M8 0.500v3.500h3.500" fill="#dfe8f2" stroke="#8aa4c2"/><path d="M2.500 2.500v7.500h7" fill="none" stroke="#66748c"/><rect x="4" y="4" width="1.700" height="5.500" fill="#ea3a2a"/><rect x="7" y="5" width="2" height="4.500" fill="#2f9a3a"/><path d="M2 11.500h7.500" stroke="#b4b6dc"/></svg></span>
<span class="t L" style="left:135.5px;top:393px;letter-spacing:0.052px">СправкаРасчетРезер...</span>
<span class="a" style="left:263px;top:395px"><svg class="st" width="14" height="14" viewBox="0 0 14 14"><rect x="0.5" y="0.5" width="13" height="13" fill="#fff" stroke="#c8c8c8"/><path d="M5.200 1.900L11 7.500L7.300 11L1.800 5.400z" fill="url(#pg)" stroke="#2a7a18" stroke-width="0.5"/><path d="M11 7.500l0.700 0.700l-3.800 3.400l-0.600-0.600z" fill="#dcf8c8"/><path d="M11.700 8.600v3.200l-3.400-0.200z" fill="#1e5a10"/></svg></span>
<span class="a" style="left:326px;top:397px"><svg class="exp" width="11" height="11" viewBox="0 0 11 11"><circle cx="5.5" cy="5.5" r="4" fill="#fff" stroke="#b4b8bc" stroke-width="1"/><path d="M3 5.5h5M5.5 3v5" stroke="#707478" stroke-width="1"/></svg></span>
<span class="a" style="left:345px;top:395px"><svg class="ico" width="12" height="14" viewBox="0 0 12 14"><path d="M0.5 0.5h7.5l3.500 3.500v9.500h-11z" fill="#fcfdff" stroke="#8aa4c2"/><path d="M8 0.500v3.500h3.500" fill="#dfe8f2" stroke="#8aa4c2"/><path d="M2.500 2.500v7.500h7" fill="none" stroke="#66748c"/><rect x="4" y="4" width="1.700" height="5.500" fill="#ea3a2a"/><rect x="7" y="5" width="2" height="4.500" fill="#2f9a3a"/><path d="M2 11.500h7.500" stroke="#b4b6dc"/></svg></span>
<span class="t R" style="left:365px;top:393px;letter-spacing:0.090px">СправкаРасчетРезервыПоСомнительнымДолгам</span>
<div class="bg blue" style="top:412px;left:38px;width:219px"></div>
<div class="bg blue" style="top:412px;left:282px;width:361px"></div>
<div class="fbox" style="top:414px"></div>
<span class="a" style="left:82px;top:416px"><svg class="exp" width="11" height="11" viewBox="0 0 11 11"><circle cx="5.5" cy="5.5" r="4" fill="#fff" stroke="#b4b8bc" stroke-width="1"/><path d="M3 5.5h5M5.5 3v5" stroke="#707478" stroke-width="1"/></svg></span>
<span class="a" style="left:99px;top:415px"><svg class="chk" width="13" height="13" viewBox="0 0 13 13"><rect x="0.5" y="0.5" width="12" height="12" rx="2.2" ry="2.2" fill="#fff" stroke="#a69b72"/><path d="M3.2 6.2l2.2 2.600l4.400-5.200" fill="none" stroke="#1a1a1a" stroke-width="1.600"/></svg></span>
<span class="a" style="left:115px;top:414px"><svg class="ico" width="12" height="14" viewBox="0 0 12 14"><path d="M0.5 0.5h7.5l3.500 3.500v9.500h-11z" fill="#fcfdff" stroke="#8aa4c2"/><path d="M8 0.500v3.500h3.500" fill="#dfe8f2" stroke="#8aa4c2"/><path d="M2.500 2.500v7.500h7" fill="none" stroke="#66748c"/><rect x="4" y="4" width="1.700" height="5.500" fill="#ea3a2a"/><rect x="7" y="5" width="2" height="4.500" fill="#2f9a3a"/><path d="M2 11.500h7.500" stroke="#b4b6dc"/></svg></span>
<span class="t L" style="left:135.5px;top:412px;letter-spacing:-0.105px">СправкаРасчетРубле...</span>
<span class="a" style="left:263px;top:414px"><svg class="st" width="14" height="14" viewBox="0 0 14 14"><rect x="0.5" y="0.5" width="13" height="13" fill="#fff" stroke="#c8c8c8"/><path d="M5.200 1.900L11 7.500L7.300 11L1.800 5.400z" fill="url(#pg)" stroke="#2a7a18" stroke-width="0.5"/><path d="M11 7.500l0.700 0.700l-3.800 3.400l-0.600-0.600z" fill="#dcf8c8"/><path d="M11.700 8.600v3.200l-3.400-0.200z" fill="#1e5a10"/></svg></span>
<span class="a" style="left:326px;top:416px"><svg class="exp" width="11" height="11" viewBox="0 0 11 11"><circle cx="5.5" cy="5.5" r="4" fill="#fff" stroke="#b4b8bc" stroke-width="1"/><path d="M3 5.5h5M5.5 3v5" stroke="#707478" stroke-width="1"/></svg></span>
<span class="a" style="left:345px;top:414px"><svg class="ico" width="12" height="14" viewBox="0 0 12 14"><path d="M0.5 0.5h7.5l3.500 3.500v9.500h-11z" fill="#fcfdff" stroke="#8aa4c2"/><path d="M8 0.500v3.500h3.500" fill="#dfe8f2" stroke="#8aa4c2"/><path d="M2.500 2.500v7.500h7" fill="none" stroke="#66748c"/><rect x="4" y="4" width="1.700" height="5.500" fill="#ea3a2a"/><rect x="7" y="5" width="2" height="4.500" fill="#2f9a3a"/><path d="M2 11.500h7.500" stroke="#b4b6dc"/></svg></span>
<span class="t R" style="left:365px;top:412px;letter-spacing:-0.036px">СправкаРасчетРублеваяСуммаДокументаВВалюте</span>
<div class="bg blue" style="top:431px;left:38px;width:219px"></div>
<div class="bg blue" style="top:431px;left:282px;width:361px"></div>
<div class="fbox" style="top:433px"></div>
<span class="a" style="left:82px;top:435px"><svg class="exp" width="11" height="11" viewBox="0 0 11 11"><circle cx="5.5" cy="5.5" r="4" fill="#fff" stroke="#b4b8bc" stroke-width="1"/><path d="M3 5.5h5M5.5 3v5" stroke="#707478" stroke-width="1"/></svg></span>
<span class="a" style="left:99px;top:434px"><svg class="chk" width="13" height="13" viewBox="0 0 13 13"><rect x="0.5" y="0.5" width="12" height="12" rx="2.2" ry="2.2" fill="#fff" stroke="#a69b72"/><path d="M3.2 6.2l2.2 2.600l4.400-5.200" fill="none" stroke="#1a1a1a" stroke-width="1.600"/></svg></span>
<span class="a" style="left:115px;top:433px"><svg class="ico" width="12" height="14" viewBox="0 0 12 14"><path d="M0.5 0.5h7.5l3.500 3.500v9.500h-11z" fill="#fcfdff" stroke="#8aa4c2"/><path d="M8 0.500v3.500h3.500" fill="#dfe8f2" stroke="#8aa4c2"/><path d="M2.500 2.500v7.500h7" fill="none" stroke="#66748c"/><rect x="4" y="4" width="1.700" height="5.500" fill="#ea3a2a"/><rect x="7" y="5" width="2" height="4.500" fill="#2f9a3a"/><path d="M2 11.500h7.500" stroke="#b4b6dc"/></svg></span>
<span class="t L" style="left:135.5px;top:431px;letter-spacing:-0.043px">СправкаРасчетСебес...</span>
<span class="a" style="left:263px;top:433px"><svg class="st" width="14" height="14" viewBox="0 0 14 14"><rect x="0.5" y="0.5" width="13" height="13" fill="#fff" stroke="#c8c8c8"/><path d="M5.200 1.900L11 7.500L7.300 11L1.800 5.400z" fill="url(#pg)" stroke="#2a7a18" stroke-width="0.5"/><path d="M11 7.500l0.700 0.700l-3.800 3.400l-0.600-0.600z" fill="#dcf8c8"/><path d="M11.700 8.600v3.200l-3.400-0.200z" fill="#1e5a10"/></svg></span>
<span class="a" style="left:326px;top:435px"><svg class="exp" width="11" height="11" viewBox="0 0 11 11"><circle cx="5.5" cy="5.5" r="4" fill="#fff" stroke="#b4b8bc" stroke-width="1"/><path d="M3 5.5h5M5.5 3v5" stroke="#707478" stroke-width="1"/></svg></span>
<span class="a" style="left:345px;top:433px"><svg class="ico" width="12" height="14" viewBox="0 0 12 14"><path d="M0.5 0.5h7.5l3.500 3.500v9.500h-11z" fill="#fcfdff" stroke="#8aa4c2"/><path d="M8 0.500v3.500h3.500" fill="#dfe8f2" stroke="#8aa4c2"/><path d="M2.500 2.500v7.500h7" fill="none" stroke="#66748c"/><rect x="4" y="4" width="1.700" height="5.500" fill="#ea3a2a"/><rect x="7" y="5" width="2" height="4.500" fill="#2f9a3a"/><path d="M2 11.500h7.500" stroke="#b4b6dc"/></svg></span>
<span class="t R" style="left:365px;top:431px;letter-spacing:0.029px">СправкаРасчетСебестоимостиПродукцииИУслуг</span>
<div class="bg blue" style="top:450px;left:38px;width:219px"></div>
<div class="bg blue" style="top:450px;left:282px;width:361px"></div>
<div class="fbox" style="top:452px"></div>
<span class="a" style="left:82px;top:454px"><svg class="exp" width="11" height="11" viewBox="0 0 11 11"><circle cx="5.5" cy="5.5" r="4" fill="#fff" stroke="#b4b8bc" stroke-width="1"/><path d="M3 5.5h5M5.5 3v5" stroke="#707478" stroke-width="1"/></svg></span>
<span class="a" style="left:99px;top:453px"><svg class="chk" width="13" height="13" viewBox="0 0 13 13"><rect x="0.5" y="0.5" width="12" height="12" rx="2.2" ry="2.2" fill="#fff" stroke="#a69b72"/><path d="M3.2 6.2l2.2 2.600l4.400-5.200" fill="none" stroke="#1a1a1a" stroke-width="1.600"/></svg></span>
<span class="a" style="left:115px;top:452px"><svg class="ico" width="12" height="14" viewBox="0 0 12 14"><path d="M0.5 0.5h7.5l3.500 3.500v9.500h-11z" fill="#fcfdff" stroke="#8aa4c2"/><path d="M8 0.500v3.500h3.500" fill="#dfe8f2" stroke="#8aa4c2"/><path d="M2.500 2.500v7.500h7" fill="none" stroke="#66748c"/><rect x="4" y="4" width="1.700" height="5.500" fill="#ea3a2a"/><rect x="7" y="5" width="2" height="4.500" fill="#2f9a3a"/><path d="M2 11.500h7.500" stroke="#b4b6dc"/></svg></span>
<span class="t L" style="left:135.5px;top:450px;letter-spacing:-0.043px">СправкаРасчетСписа...</span>
<span class="a" style="left:263px;top:452px"><svg class="st" width="14" height="14" viewBox="0 0 14 14"><rect x="0.5" y="0.5" width="13" height="13" fill="#fff" stroke="#c8c8c8"/><path d="M5.200 1.900L11 7.500L7.300 11L1.800 5.400z" fill="url(#pg)" stroke="#2a7a18" stroke-width="0.5"/><path d="M11 7.500l0.700 0.700l-3.800 3.400l-0.600-0.600z" fill="#dcf8c8"/><path d="M11.700 8.600v3.200l-3.400-0.200z" fill="#1e5a10"/></svg></span>
<span class="a" style="left:326px;top:454px"><svg class="exp" width="11" height="11" viewBox="0 0 11 11"><circle cx="5.5" cy="5.5" r="4" fill="#fff" stroke="#b4b8bc" stroke-width="1"/><path d="M3 5.5h5M5.5 3v5" stroke="#707478" stroke-width="1"/></svg></span>
<span class="a" style="left:345px;top:452px"><svg class="ico" width="12" height="14" viewBox="0 0 12 14"><path d="M0.5 0.5h7.5l3.500 3.500v9.500h-11z" fill="#fcfdff" stroke="#8aa4c2"/><path d="M8 0.500v3.500h3.500" fill="#dfe8f2" stroke="#8aa4c2"/><path d="M2.500 2.500v7.500h7" fill="none" stroke="#66748c"/><rect x="4" y="4" width="1.700" height="5.500" fill="#ea3a2a"/><rect x="7" y="5" width="2" height="4.500" fill="#2f9a3a"/><path d="M2 11.500h7.500" stroke="#b4b6dc"/></svg></span>
<span class="t R" style="left:365px;top:450px;letter-spacing:-0.054px">СправкаРасчетСписаниеРБП</span>
<div class="bg blue" style="top:469px;left:38px;width:219px"></div>
<div class="bg blue" style="top:469px;left:282px;width:361px"></div>
<div class="fbox" style="top:471px"></div>
<span class="a" style="left:82px;top:473px"><svg class="exp" width="11" height="11" viewBox="0 0 11 11"><circle cx="5.5" cy="5.5" r="4" fill="#fff" stroke="#b4b8bc" stroke-width="1"/><path d="M3 5.5h5M5.5 3v5" stroke="#707478" stroke-width="1"/></svg></span>
<span class="a" style="left:99px;top:472px"><svg class="chk" width="13" height="13" viewBox="0 0 13 13"><rect x="0.5" y="0.5" width="12" height="12" rx="2.2" ry="2.2" fill="#fff" stroke="#a69b72"/><path d="M3.2 6.2l2.2 2.600l4.400-5.200" fill="none" stroke="#1a1a1a" stroke-width="1.600"/></svg></span>
<span class="a" style="left:115px;top:471px"><svg class="ico" width="12" height="14" viewBox="0 0 12 14"><path d="M0.5 0.5h7.5l3.500 3.500v9.500h-11z" fill="#fcfdff" stroke="#8aa4c2"/><path d="M8 0.500v3.500h3.500" fill="#dfe8f2" stroke="#8aa4c2"/><path d="M2.500 2.500v7.500h7" fill="none" stroke="#66748c"/><rect x="4" y="4" width="1.700" height="5.500" fill="#ea3a2a"/><rect x="7" y="5" width="2" height="4.500" fill="#2f9a3a"/><path d="M2 11.500h7.500" stroke="#b4b6dc"/></svg></span>
<span class="t L" style="left:135.5px;top:469px;letter-spacing:-0.043px">СправкаРасчетСписа...</span>
<span class="a" style="left:263px;top:471px"><svg class="st" width="14" height="14" viewBox="0 0 14 14"><rect x="0.5" y="0.5" width="13" height="13" fill="#fff" stroke="#c8c8c8"/><path d="M5.200 1.900L11 7.500L7.300 11L1.800 5.400z" fill="url(#pg)" stroke="#2a7a18" stroke-width="0.5"/><path d="M11 7.500l0.700 0.700l-3.800 3.400l-0.600-0.600z" fill="#dcf8c8"/><path d="M11.700 8.600v3.200l-3.400-0.200z" fill="#1e5a10"/></svg></span>
<span class="a" style="left:326px;top:473px"><svg class="exp" width="11" height="11" viewBox="0 0 11 11"><circle cx="5.5" cy="5.5" r="4" fill="#fff" stroke="#b4b8bc" stroke-width="1"/><path d="M3 5.5h5M5.5 3v5" stroke="#707478" stroke-width="1"/></svg></span>
<span class="a" style="left:345px;top:471px"><svg class="ico" width="12" height="14" viewBox="0 0 12 14"><path d="M0.5 0.5h7.5l3.500 3.500v9.500h-11z" fill="#fcfdff" stroke="#8aa4c2"/><path d="M8 0.500v3.500h3.500" fill="#dfe8f2" stroke="#8aa4c2"/><path d="M2.500 2.500v7.500h7" fill="none" stroke="#66748c"/><rect x="4" y="4" width="1.700" height="5.500" fill="#ea3a2a"/><rect x="7" y="5" width="2" height="4.500" fill="#2f9a3a"/><path d="M2 11.500h7.500" stroke="#b4b6dc"/></svg></span>
<span class="t R" style="left:365px;top:469px">СправкаРасчетСписанияКосвенныхРасходов</span>
<div class="bg blue" style="top:488px;left:38px;width:219px"></div>
<div class="bg blue" style="top:488px;left:282px;width:361px"></div>
<div class="fbox" style="top:490px"></div>
<span class="a" style="left:82px;top:492px"><svg class="exp" width="11" height="11" viewBox="0 0 11 11"><circle cx="5.5" cy="5.5" r="4" fill="#fff" stroke="#b4b8bc" stroke-width="1"/><path d="M3 5.5h5M5.5 3v5" stroke="#707478" stroke-width="1"/></svg></span>
<span class="a" style="left:99px;top:491px"><svg class="chk" width="13" height="13" viewBox="0 0 13 13"><rect x="0.5" y="0.5" width="12" height="12" rx="2.2" ry="2.2" fill="#fff" stroke="#a69b72"/><path d="M3.2 6.2l2.2 2.600l4.400-5.200" fill="none" stroke="#1a1a1a" stroke-width="1.600"/></svg></span>
<span class="a" style="left:115px;top:490px"><svg class="ico" width="12" height="14" viewBox="0 0 12 14"><path d="M0.5 0.5h7.5l3.500 3.500v9.500h-11z" fill="#fcfdff" stroke="#8aa4c2"/><path d="M8 0.500v3.500h3.500" fill="#dfe8f2" stroke="#8aa4c2"/><path d="M2.500 2.500v7.500h7" fill="none" stroke="#66748c"/><rect x="4" y="4" width="1.700" height="5.500" fill="#ea3a2a"/><rect x="7" y="5" width="2" height="4.500" fill="#2f9a3a"/><path d="M2 11.500h7.500" stroke="#b4b6dc"/></svg></span>
<span class="t L" style="left:135.5px;top:488px">ТоварныйОтчетТОРГ...</span>
<span class="a" style="left:263px;top:490px"><svg class="st" width="14" height="14" viewBox="0 0 14 14"><rect x="0.5" y="0.5" width="13" height="13" fill="#fff" stroke="#c8c8c8"/><path d="M5.200 1.900L11 7.500L7.300 11L1.800 5.400z" fill="url(#pg)" stroke="#2a7a18" stroke-width="0.5"/><path d="M11 7.500l0.700 0.700l-3.800 3.400l-0.600-0.600z" fill="#dcf8c8"/><path d="M11.700 8.600v3.200l-3.400-0.200z" fill="#1e5a10"/></svg></span>
<span class="a" style="left:326px;top:492px"><svg class="exp" width="11" height="11" viewBox="0 0 11 11"><circle cx="5.5" cy="5.5" r="4" fill="#fff" stroke="#b4b8bc" stroke-width="1"/><path d="M3 5.5h5M5.5 3v5" stroke="#707478" stroke-width="1"/></svg></span>
<span class="a" style="left:345px;top:490px"><svg class="ico" width="12" height="14" viewBox="0 0 12 14"><path d="M0.5 0.5h7.5l3.500 3.500v9.500h-11z" fill="#fcfdff" stroke="#8aa4c2"/><path d="M8 0.500v3.500h3.500" fill="#dfe8f2" stroke="#8aa4c2"/><path d="M2.500 2.500v7.500h7" fill="none" stroke="#66748c"/><rect x="4" y="4" width="1.700" height="5.500" fill="#ea3a2a"/><rect x="7" y="5" width="2" height="4.500" fill="#2f9a3a"/><path d="M2 11.500h7.500" stroke="#b4b6dc"/></svg></span>
<span class="t R" style="left:365px;top:488px">ТоварныйОтчетТОРГ29</span>
<div class="bg blue" style="top:507px;left:38px;width:219px"></div>
<div class="bg blue" style="top:507px;left:282px;width:361px"></div>
<div class="fbox" style="top:509px"></div>
<span class="a" style="left:82px;top:511px"><svg class="exp" width="11" height="11" viewBox="0 0 11 11"><circle cx="5.5" cy="5.5" r="4" fill="#fff" stroke="#b4b8bc" stroke-width="1"/><path d="M3 5.5h5M5.5 3v5" stroke="#707478" stroke-width="1"/></svg></span>
<span class="a" style="left:99px;top:510px"><svg class="chk" width="13" height="13" viewBox="0 0 13 13"><rect x="0.5" y="0.5" width="12" height="12" rx="2.2" ry="2.2" fill="#fff" stroke="#a69b72"/><path d="M3.2 6.2l2.2 2.600l4.400-5.200" fill="none" stroke="#1a1a1a" stroke-width="1.600"/></svg></span>
<span class="a" style="left:115px;top:509px"><svg class="ico" width="12" height="14" viewBox="0 0 12 14"><path d="M0.5 0.5h7.5l3.500 3.500v9.500h-11z" fill="#fcfdff" stroke="#8aa4c2"/><path d="M8 0.500v3.500h3.500" fill="#dfe8f2" stroke="#8aa4c2"/><path d="M2.500 2.500v7.500h7" fill="none" stroke="#66748c"/><rect x="4" y="4" width="1.700" height="5.500" fill="#ea3a2a"/><rect x="7" y="5" width="2" height="4.500" fill="#2f9a3a"/><path d="M2 11.500h7.500" stroke="#b4b6dc"/></svg></span>
<span class="t L" style="left:135.5px;top:507px">ШахматнаяВедомост...</span>
<span class="a" style="left:263px;top:509px"><svg class="st" width="14" height="14" viewBox="0 0 14 14"><rect x="0.5" y="0.5" width="13" height="13" fill="#fff" stroke="#c8c8c8"/><path d="M5.200 1.900L11 7.500L7.300 11L1.800 5.400z" fill="url(#pg)" stroke="#2a7a18" stroke-width="0.5"/><path d="M11 7.500l0.700 0.700l-3.800 3.400l-0.600-0.600z" fill="#dcf8c8"/><path d="M11.700 8.600v3.200l-3.400-0.200z" fill="#1e5a10"/></svg></span>
<span class="a" style="left:326px;top:511px"><svg class="exp" width="11" height="11" viewBox="0 0 11 11"><circle cx="5.5" cy="5.5" r="4" fill="#fff" stroke="#b4b8bc" stroke-width="1"/><path d="M3 5.5h5M5.5 3v5" stroke="#707478" stroke-width="1"/></svg></span>
<span class="a" style="left:345px;top:509px"><svg class="ico" width="12" height="14" viewBox="0 0 12 14"><path d="M0.5 0.5h7.5l3.500 3.500v9.500h-11z" fill="#fcfdff" stroke="#8aa4c2"/><path d="M8 0.500v3.500h3.500" fill="#dfe8f2" stroke="#8aa4c2"/><path d="M2.500 2.500v7.500h7" fill="none" stroke="#66748c"/><rect x="4" y="4" width="1.700" height="5.500" fill="#ea3a2a"/><rect x="7" y="5" width="2" height="4.500" fill="#2f9a3a"/><path d="M2 11.500h7.500" stroke="#b4b6dc"/></svg></span>
<span class="t R" style="left:365px;top:507px">ШахматнаяВедомостьХозрасчетный</span>
<div class="bg green" style="top:526px;left:282px;width:361px"></div>
<span class="a" style="left:82px;top:530px"><svg class="exp" width="11" height="11" viewBox="0 0 11 11"><circle cx="5.5" cy="5.5" r="4" fill="#fff" stroke="#b4b8bc" stroke-width="1"/><path d="M3 5.5h5M5.5 3v5" stroke="#707478" stroke-width="1"/></svg></span>
<span class="a" style="left:99px;top:529px"><svg class="chk" width="13" height="13" viewBox="0 0 13 13"><rect x="0.5" y="0.5" width="12" height="12" rx="2.2" ry="2.2" fill="#fff" stroke="#a69b72"/><path d="M3.2 6.2l2.2 2.600l4.400-5.200" fill="none" stroke="#1a1a1a" stroke-width="1.600"/></svg></span>
<span class="a" style="left:115px;top:528px"><svg class="ico" width="12" height="14" viewBox="0 0 12 14"><path d="M0.5 0.5h7.5l3.500 3.500v9.500h-11z" fill="#fcfdff" stroke="#8aa4c2"/><path d="M8 0.500v3.500h3.500" fill="#dfe8f2" stroke="#8aa4c2"/><path d="M2.500 2.500v7.500h7" fill="none" stroke="#66748c"/><rect x="4" y="4" width="1.700" height="5.500" fill="#ea3a2a"/><rect x="7" y="5" width="2" height="4.500" fill="#2f9a3a"/><path d="M2 11.500h7.500" stroke="#b4b6dc"/></svg></span>
<span class="t L" style="left:135.5px;top:526px">&lt;Отсутствует&gt;</span>
<span class="a" style="left:263px;top:528px"><svg class="st" width="14" height="14" viewBox="0 0 14 14"><rect x="0.5" y="0.5" width="13" height="13" fill="#fff" stroke="#c8c8c8"/><path d="M3 7h8M7 3v8" stroke="#2f961f" stroke-width="2"/></svg></span>
<span class="a" style="left:326px;top:530px"><svg class="exp" width="11" height="11" viewBox="0 0 11 11"><circle cx="5.5" cy="5.5" r="4" fill="#fff" stroke="#b4b8bc" stroke-width="1"/><path d="M3 5.5h5M5.5 3v5" stroke="#707478" stroke-width="1"/></svg></span>
<span class="a" style="left:345px;top:528px"><svg class="ico" width="12" height="14" viewBox="0 0 12 14"><path d="M0.5 0.5h7.5l3.500 3.500v9.500h-11z" fill="#fcfdff" stroke="#8aa4c2"/><path d="M8 0.500v3.500h3.500" fill="#dfe8f2" stroke="#8aa4c2"/><path d="M2.500 2.500v7.500h7" fill="none" stroke="#66748c"/><rect x="4" y="4" width="1.700" height="5.500" fill="#ea3a2a"/><rect x="7" y="5" width="2" height="4.500" fill="#2f9a3a"/><path d="M2 11.500h7.500" stroke="#b4b6dc"/></svg></span>
<span class="t R" style="left:365px;top:526px;letter-spacing:-0.063px">РегламентированныйОтчетБухОтчетностьМП</span>
<span class="a" style="left:649px;top:530px"><svg class="ord" width="14" height="12" viewBox="0 0 14 12"><path d="M3.500 0.500v9M10.500 2v9" fill="none" stroke="#6a6a6a" stroke-width="1"/><path d="M1.500 7.800h4l-2 3zM8.500 3.700h4l-2-3z" fill="#5e5e5e"/></svg></span>
<span class="t" style="left:669px;top:526px">Порядок из новой конфи...</span>
<div class="selbg" style="top:545px"></div>
<div class="fbox" style="top:547px;background:#5568c4;border-color:#b4b4c4"><i style="position:absolute;left:2px;top:5px;width:8px;height:2px;background:#e42222"></i></div>
<span class="a" style="left:82px;top:549px"><svg class="exp" width="11" height="11" viewBox="0 0 11 11"><circle cx="5.5" cy="5.5" r="4" fill="#eef0fb" stroke="#4050a8" stroke-width="1.2"/><path d="M3 5.500h5M5.500 3v5" stroke="#3c3c44" stroke-width="1.300"/></svg></span>
<span class="a" style="left:99px;top:548px"><svg class="chk" width="13" height="13" viewBox="0 0 13 13"><rect x="0.5" y="0.5" width="12" height="12" rx="2.2" ry="2.2" fill="#fff" stroke="#a69b72"/></svg></span>
<span class="a" style="left:115px;top:547px"><svg class="ico" width="12" height="14" viewBox="0 0 12 14"><path d="M0.5 0.5h7.5l3.500 3.500v9.500h-11z" fill="#fcfdff" stroke="#8aa4c2"/><path d="M8 0.500v3.500h3.500" fill="#dfe8f2" stroke="#8aa4c2"/><path d="M2.500 2.500v7.500h7" fill="none" stroke="#66748c"/><rect x="4" y="4" width="1.700" height="5.500" fill="#ea3a2a"/><rect x="7" y="5" width="2" height="4.500" fill="#2f9a3a"/><path d="M2 11.500h7.500" stroke="#b4b6dc"/></svg></span>
<span class="t L w" style="left:135.5px;top:545px">&lt;Отсутствует&gt;</span>
<span class="a" style="left:263px;top:547px"><svg class="st" width="14" height="14" viewBox="0 0 14 14"><rect x="0.5" y="0.5" width="13" height="13" fill="#5568c4" stroke="#c9c3a6"/><path d="M5.200 1.900L11 7.500L7.300 11L1.800 5.400z" fill="url(#pg)" stroke="#2a7a18" stroke-width="0.5"/><path d="M11 7.500l0.700 0.700l-3.800 3.400l-0.600-0.600z" fill="#dcf8c8"/><path d="M11.700 8.600v3.200l-3.400-0.200z" fill="#1e5a10"/></svg></span>
<span class="a" style="left:326px;top:549px"><svg class="exp" width="11" height="11" viewBox="0 0 11 11"><circle cx="5.5" cy="5.5" r="4" fill="#eef0fb" stroke="#4050a8" stroke-width="1.2"/><path d="M3 5.500h5M5.500 3v5" stroke="#3c3c44" stroke-width="1.300"/></svg></span>
<span class="a" style="left:345px;top:547px"><svg class="ico" width="12" height="14" viewBox="0 0 12 14"><path d="M0.5 0.5h7.5l3.500 3.500v9.500h-11z" fill="#fcfdff" stroke="#8aa4c2"/><path d="M8 0.500v3.500h3.500" fill="#dfe8f2" stroke="#8aa4c2"/><path d="M2.500 2.500v7.500h7" fill="none" stroke="#66748c"/><rect x="4" y="4" width="1.700" height="5.500" fill="#ea3a2a"/><rect x="7" y="5" width="2" height="4.500" fill="#2f9a3a"/><path d="M2 11.500h7.500" stroke="#b4b6dc"/></svg></span>
<span class="t R w" style="left:365px;top:545px;letter-spacing:0.070px">РегламентированныйОтчетНДПИ</span>
<div class="bg green" style="top:564px;left:282px;width:361px"></div>
<span class="a" style="left:82px;top:568px"><svg class="exp" width="11" height="11" viewBox="0 0 11 11"><circle cx="5.5" cy="5.5" r="4" fill="#fff" stroke="#b4b8bc" stroke-width="1"/><path d="M3 5.5h5M5.5 3v5" stroke="#707478" stroke-width="1"/></svg></span>
<span class="a" style="left:99px;top:567px"><svg class="chk" width="13" height="13" viewBox="0 0 13 13"><rect x="0.5" y="0.5" width="12" height="12" rx="2.2" ry="2.2" fill="#fff" stroke="#a69b72"/><path d="M3.2 6.2l2.2 2.600l4.400-5.200" fill="none" stroke="#1a1a1a" stroke-width="1.600"/></svg></span>
<span class="a" style="left:115px;top:566px"><svg class="ico" width="12" height="14" viewBox="0 0 12 14"><path d="M0.5 0.5h7.5l3.500 3.500v9.500h-11z" fill="#fcfdff" stroke="#8aa4c2"/><path d="M8 0.500v3.500h3.500" fill="#dfe8f2" stroke="#8aa4c2"/><path d="M2.500 2.500v7.500h7" fill="none" stroke="#66748c"/><rect x="4" y="4" width="1.700" height="5.500" fill="#ea3a2a"/><rect x="7" y="5" width="2" height="4.500" fill="#2f9a3a"/><path d="M2 11.500h7.500" stroke="#b4b6dc"/></svg></span>
<span class="t L" style="left:135.5px;top:564px">&lt;Отсутствует&gt;</span>
<span class="a" style="left:263px;top:566px"><svg class="st" width="14" height="14" viewBox="0 0 14 14"><rect x="0.5" y="0.5" width="13" height="13" fill="#fff" stroke="#c8c8c8"/><path d="M3 7h8M7 3v8" stroke="#2f961f" stroke-width="2"/></svg></span>
<span class="a" style="left:326px;top:568px"><svg class="exp" width="11" height="11" viewBox="0 0 11 11"><circle cx="5.5" cy="5.5" r="4" fill="#fff" stroke="#b4b8bc" stroke-width="1"/><path d="M3 5.5h5M5.5 3v5" stroke="#707478" stroke-width="1"/></svg></span>
<span class="a" style="left:345px;top:566px"><svg class="ico" width="12" height="14" viewBox="0 0 12 14"><path d="M0.5 0.5h7.5l3.500 3.500v9.500h-11z" fill="#fcfdff" stroke="#8aa4c2"/><path d="M8 0.500v3.500h3.500" fill="#dfe8f2" stroke="#8aa4c2"/><path d="M2.500 2.500v7.500h7" fill="none" stroke="#66748c"/><rect x="4" y="4" width="1.700" height="5.500" fill="#ea3a2a"/><rect x="7" y="5" width="2" height="4.500" fill="#2f9a3a"/><path d="M2 11.500h7.500" stroke="#b4b6dc"/></svg></span>
<span class="t R" style="left:365px;top:564px;letter-spacing:0.076px">РегламентированныйОтчетСтатистикаФормаЗПЗд...</span>
<span class="a" style="left:649px;top:568px"><svg class="ord" width="14" height="12" viewBox="0 0 14 12"><path d="M3.500 0.500v9M10.500 2v9" fill="none" stroke="#6a6a6a" stroke-width="1"/><path d="M1.500 7.800h4l-2 3zM8.500 3.700h4l-2-3z" fill="#5e5e5e"/></svg></span>
<span class="t" style="left:669px;top:564px">Порядок из новой конфи...</span>
<div class="bg green" style="top:583px;left:282px;width:361px"></div>
<span class="a" style="left:82px;top:587px"><svg class="exp" width="11" height="11" viewBox="0 0 11 11"><circle cx="5.5" cy="5.5" r="4" fill="#fff" stroke="#b4b8bc" stroke-width="1"/><path d="M3 5.5h5M5.5 3v5" stroke="#707478" stroke-width="1"/></svg></span>
<span class="a" style="left:99px;top:586px"><svg class="chk" width="13" height="13" viewBox="0 0 13 13"><rect x="0.5" y="0.5" width="12" height="12" rx="2.2" ry="2.2" fill="#fff" stroke="#a69b72"/><path d="M3.2 6.2l2.2 2.600l4.400-5.200" fill="none" stroke="#1a1a1a" stroke-width="1.600"/></svg></span>
<span class="a" style="left:115px;top:585px"><svg class="ico" width="12" height="14" viewBox="0 0 12 14"><path d="M0.5 0.5h7.5l3.500 3.500v9.500h-11z" fill="#fcfdff" stroke="#8aa4c2"/><path d="M8 0.500v3.500h3.500" fill="#dfe8f2" stroke="#8aa4c2"/><path d="M2.500 2.500v7.500h7" fill="none" stroke="#66748c"/><rect x="4" y="4" width="1.700" height="5.500" fill="#ea3a2a"/><rect x="7" y="5" width="2" height="4.500" fill="#2f9a3a"/><path d="M2 11.500h7.500" stroke="#b4b6dc"/></svg></span>
<span class="t L" style="left:135.5px;top:583px">&lt;Отсутствует&gt;</span>
<span class="a" style="left:263px;top:585px"><svg class="st" width="14" height="14" viewBox="0 0 14 14"><rect x="0.5" y="0.5" width="13" height="13" fill="#fff" stroke="#c8c8c8"/><path d="M3 7h8M7 3v8" stroke="#2f961f" stroke-width="2"/></svg></span>
<span class="a" style="left:326px;top:587px"><svg class="exp" width="11" height="11" viewBox="0 0 11 11"><circle cx="5.5" cy="5.5" r="4" fill="#fff" stroke="#b4b8bc" stroke-width="1"/><path d="M3 5.5h5M5.5 3v5" stroke="#707478" stroke-width="1"/></svg></span>
<span class="a" style="left:345px;top:585px"><svg class="ico" width="12" height="14" viewBox="0 0 12 14"><path d="M0.5 0.5h7.5l3.500 3.500v9.500h-11z" fill="#fcfdff" stroke="#8aa4c2"/><path d="M8 0.500v3.500h3.500" fill="#dfe8f2" stroke="#8aa4c2"/><path d="M2.500 2.500v7.500h7" fill="none" stroke="#66748c"/><rect x="4" y="4" width="1.700" height="5.500" fill="#ea3a2a"/><rect x="7" y="5" width="2" height="4.500" fill="#2f9a3a"/><path d="M2 11.500h7.500" stroke="#b4b6dc"/></svg></span>
<span class="t R" style="left:365px;top:583px;letter-spacing:0.131px">РегламентированныйОтчетСтатистикаФормаЗПКу...</span>
<span class="a" style="left:649px;top:587px"><svg class="ord" width="14" height="12" viewBox="0 0 14 12"><path d="M3.500 0.500v9M10.500 2v9" fill="none" stroke="#6a6a6a" stroke-width="1"/><path d="M1.500 7.800h4l-2 3zM8.500 3.700h4l-2-3z" fill="#5e5e5e"/></svg></span>
<span class="t" style="left:669px;top:583px">Порядок из новой конфи...</span>
<div class="bg green" style="top:602px;left:282px;width:361px"></div>
<span class="a" style="left:82px;top:606px"><svg class="exp" width="11" height="11" viewBox="0 0 11 11"><circle cx="5.5" cy="5.5" r="4" fill="#fff" stroke="#b4b8bc" stroke-width="1"/><path d="M3 5.5h5M5.5 3v5" stroke="#707478" stroke-width="1"/></svg></span>
<span class="a" style="left:99px;top:605px"><svg class="chk" width="13" height="13" viewBox="0 0 13 13"><rect x="0.5" y="0.5" width="12" height="12" rx="2.2" ry="2.2" fill="#fff" stroke="#a69b72"/><path d="M3.2 6.2l2.2 2.600l4.400-5.200" fill="none" stroke="#1a1a1a" stroke-width="1.600"/></svg></span>
<span class="a" style="left:115px;top:604px"><svg class="ico" width="12" height="14" viewBox="0 0 12 14"><path d="M0.5 0.5h7.5l3.500 3.500v9.500h-11z" fill="#fcfdff" stroke="#8aa4c2"/><path d="M8 0.500v3.500h3.500" fill="#dfe8f2" stroke="#8aa4c2"/><path d="M2.500 2.500v7.500h7" fill="none" stroke="#66748c"/><rect x="4" y="4" width="1.700" height="5.500" fill="#ea3a2a"/><rect x="7" y="5" width="2" height="4.500" fill="#2f9a3a"/><path d="M2 11.500h7.500" stroke="#b4b6dc"/></svg></span>
<span class="t L" style="left:135.5px;top:602px">&lt;Отсутствует&gt;</span>
<span class="a" style="left:263px;top:604px"><svg class="st" width="14" height="14" viewBox="0 0 14 14"><rect x="0.5" y="0.5" width="13" height="13" fill="#fff" stroke="#c8c8c8"/><path d="M3 7h8M7 3v8" stroke="#2f961f" stroke-width="2"/></svg></span>
<span class="a" style="left:326px;top:606px"><svg class="exp" width="11" height="11" viewBox="0 0 11 11"><circle cx="5.5" cy="5.5" r="4" fill="#fff" stroke="#b4b8bc" stroke-width="1"/><path d="M3 5.5h5M5.5 3v5" stroke="#707478" stroke-width="1"/></svg></span>
<span class="a" style="left:345px;top:604px"><svg class="ico" width="12" height="14" viewBox="0 0 12 14"><path d="M0.5 0.5h7.5l3.500 3.500v9.500h-11z" fill="#fcfdff" stroke="#8aa4c2"/><path d="M8 0.500v3.500h3.500" fill="#dfe8f2" stroke="#8aa4c2"/><path d="M2.500 2.500v7.500h7" fill="none" stroke="#66748c"/><rect x="4" y="4" width="1.700" height="5.500" fill="#ea3a2a"/><rect x="7" y="5" width="2" height="4.500" fill="#2f9a3a"/><path d="M2 11.500h7.500" stroke="#b4b6dc"/></svg></span>
<span class="t R" style="left:365px;top:602px;letter-spacing:0.080px">РегламентированныйОтчетСтатистикаФормаЗПНа...</span>
<span class="a" style="left:649px;top:606px"><svg class="ord" width="14" height="12" viewBox="0 0 14 12"><path d="M3.500 0.500v9M10.500 2v9" fill="none" stroke="#6a6a6a" stroke-width="1"/><path d="M1.500 7.800h4l-2 3zM8.500 3.700h4l-2-3z" fill="#5e5e5e"/></svg></span>
<span class="t" style="left:669px;top:602px">Порядок из новой конфи...</span>
<div class="bg green" style="top:621px;left:282px;width:361px"></div>
<span class="a" style="left:82px;top:625px"><svg class="exp" width="11" height="11" viewBox="0 0 11 11"><circle cx="5.5" cy="5.5" r="4" fill="#fff" stroke="#b4b8bc" stroke-width="1"/><path d="M3 5.5h5M5.5 3v5" stroke="#707478" stroke-width="1"/></svg></span>
<span class="a" style="left:99px;top:624px"><svg class="chk" width="13" height="13" viewBox="0 0 13 13"><rect x="0.5" y="0.5" width="12" height="12" rx="2.2" ry="2.2" fill="#fff" stroke="#a69b72"/><path d="M3.2 6.2l2.2 2.600l4.400-5.200" fill="none" stroke="#1a1a1a" stroke-width="1.600"/></svg></span>
<span class="a" style="left:115px;top:623px"><svg class="ico" width="12" height="14" viewBox="0 0 12 14"><path d="M0.5 0.5h7.5l3.500 3.500v9.500h-11z" fill="#fcfdff" stroke="#8aa4c2"/><path d="M8 0.500v3.500h3.500" fill="#dfe8f2" stroke="#8aa4c2"/><path d="M2.500 2.500v7.500h7" fill="none" stroke="#66748c"/><rect x="4" y="4" width="1.700" height="5.500" fill="#ea3a2a"/><rect x="7" y="5" width="2" height="4.500" fill="#2f9a3a"/><path d="M2 11.500h7.500" stroke="#b4b6dc"/></svg></span>
<span class="t L" style="left:135.5px;top:621px">&lt;Отсутствует&gt;</span>
<span class="a" style="left:263px;top:623px"><svg class="st" width="14" height="14" viewBox="0 0 14 14"><rect x="0.5" y="0.5" width="13" height="13" fill="#fff" stroke="#c8c8c8"/><path d="M3 7h8M7 3v8" stroke="#2f961f" stroke-width="2"/></svg></span>
<span class="a" style="left:326px;top:625px"><svg class="exp" width="11" height="11" viewBox="0 0 11 11"><circle cx="5.5" cy="5.5" r="4" fill="#fff" stroke="#b4b8bc" stroke-width="1"/><path d="M3 5.5h5M5.5 3v5" stroke="#707478" stroke-width="1"/></svg></span>
<span class="a" style="left:345px;top:623px"><svg class="ico" width="12" height="14" viewBox="0 0 12 14"><path d="M0.5 0.5h7.5l3.500 3.500v9.500h-11z" fill="#fcfdff" stroke="#8aa4c2"/><path d="M8 0.500v3.500h3.500" fill="#dfe8f2" stroke="#8aa4c2"/><path d="M2.500 2.500v7.500h7" fill="none" stroke="#66748c"/><rect x="4" y="4" width="1.700" height="5.500" fill="#ea3a2a"/><rect x="7" y="5" width="2" height="4.500" fill="#2f9a3a"/><path d="M2 11.500h7.500" stroke="#b4b6dc"/></svg></span>
<span class="t R" style="left:365px;top:621px;letter-spacing:0.051px">РегламентированныйОтчетСтатистикаФормаЗПОб...</span>
<span class="a" style="left:649px;top:625px"><svg class="ord" width="14" height="12" viewBox="0 0 14 12"><path d="M3.500 0.500v9M10.500 2v9" fill="none" stroke="#6a6a6a" stroke-width="1"/><path d="M1.500 7.800h4l-2 3zM8.500 3.700h4l-2-3z" fill="#5e5e5e"/></svg></span>
<span class="t" style="left:669px;top:621px">Порядок из новой конфи...</span>
<div class="bg green" style="top:640px;left:282px;width:361px"></div>
<span class="a" style="left:82px;top:644px"><svg class="exp" width="11" height="11" viewBox="0 0 11 11"><circle cx="5.5" cy="5.5" r="4" fill="#fff" stroke="#b4b8bc" stroke-width="1"/><path d="M3 5.5h5M5.5 3v5" stroke="#707478" stroke-width="1"/></svg></span>
<span class="a" style="left:99px;top:643px"><svg class="chk" width="13" height="13" viewBox="0 0 13 13"><rect x="0.5" y="0.5" width="12" height="12" rx="2.2" ry="2.2" fill="#fff" stroke="#a69b72"/><path d="M3.2 6.2l2.2 2.600l4.400-5.200" fill="none" stroke="#1a1a1a" stroke-width="1.600"/></svg></span>
<span class="a" style="left:115px;top:642px"><svg class="ico" width="12" height="14" viewBox="0 0 12 14"><path d="M0.5 0.5h7.5l3.500 3.500v9.500h-11z" fill="#fcfdff" stroke="#8aa4c2"/><path d="M8 0.500v3.500h3.500" fill="#dfe8f2" stroke="#8aa4c2"/><path d="M2.500 2.500v7.500h7" fill="none" stroke="#66748c"/><rect x="4" y="4" width="1.700" height="5.500" fill="#ea3a2a"/><rect x="7" y="5" width="2" height="4.500" fill="#2f9a3a"/><path d="M2 11.500h7.500" stroke="#b4b6dc"/></svg></span>
<span class="t L" style="left:135.5px;top:640px">&lt;Отсутствует&gt;</span>
<span class="a" style="left:263px;top:642px"><svg class="st" width="14" height="14" viewBox="0 0 14 14"><rect x="0.5" y="0.5" width="13" height="13" fill="#fff" stroke="#c8c8c8"/><path d="M3 7h8M7 3v8" stroke="#2f961f" stroke-width="2"/></svg></span>
<span class="a" style="left:326px;top:644px"><svg class="exp" width="11" height="11" viewBox="0 0 11 11"><circle cx="5.5" cy="5.5" r="4" fill="#fff" stroke="#b4b8bc" stroke-width="1"/><path d="M3 5.5h5M5.5 3v5" stroke="#707478" stroke-width="1"/></svg></span>
<span class="a" style="left:345px;top:642px"><svg class="ico" width="12" height="14" viewBox="0 0 12 14"><path d="M0.5 0.5h7.5l3.500 3.500v9.500h-11z" fill="#fcfdff" stroke="#8aa4c2"/><path d="M8 0.500v3.500h3.500" fill="#dfe8f2" stroke="#8aa4c2"/><path d="M2.500 2.500v7.500h7" fill="none" stroke="#66748c"/><rect x="4" y="4" width="1.700" height="5.500" fill="#ea3a2a"/><rect x="7" y="5" width="2" height="4.500" fill="#2f9a3a"/><path d="M2 11.500h7.500" stroke="#b4b6dc"/></svg></span>
<span class="t R" style="left:365px;top:640px;letter-spacing:0.028px">РегламентированныйОтчетСтатистикаФормаЗПСоц</span>
<span class="a" style="left:649px;top:644px"><svg class="ord" width="14" height="12" viewBox="0 0 14 12"><path d="M3.500 0.500v9M10.500 2v9" fill="none" stroke="#6a6a6a" stroke-width="1"/><path d="M1.500 7.800h4l-2 3zM8.500 3.700h4l-2-3z" fill="#5e5e5e"/></svg></span>
<span class="t" style="left:669px;top:640px">Порядок из новой конфи...</span>
<span class="a" style="left:63px;top:663px"><svg class="exp" width="11" height="11" viewBox="0 0 11 11"><circle cx="5.5" cy="5.5" r="4" fill="#fff" stroke="#b4b8bc" stroke-width="1"/><path d="M3 5.5h5M5.5 3v5" stroke="#707478" stroke-width="1"/></svg></span>
<span class="a" style="left:80px;top:662px"><svg class="chk" width="13" height="13" viewBox="0 0 13 13"><rect x="0.5" y="0.5" width="12" height="12" rx="2.2" ry="2.2" fill="#fff" stroke="#a69b72"/><path d="M3.2 6.2l2.2 2.600l4.400-5.200" fill="none" stroke="#1a1a1a" stroke-width="1.600"/></svg></span>
<span class="a" style="left:94px;top:660px"><svg class="ico" width="15" height="15" viewBox="0 0 15 15"><path d="M11 0.500l3.500 3.500l-3.500 3.500l-3.500-3.500z" fill="#f8dc50" stroke="#e8c030" stroke-width="0.600"/><path d="M8 3.500h-3.500v6" fill="none" stroke="#333" stroke-dasharray="1.500 1"/><rect x="0.500" y="9" width="8" height="5.500" rx="1" fill="#5f98d8" stroke="#3f70b0"/><path d="M2.500 10l2 2.500l2-2.500z" fill="#fff" stroke="#223" stroke-width="0.600"/></svg></span>
<span class="t L" style="left:116px;top:659px">Обработки</span>
<span class="a" style="left:307px;top:663px"><svg class="exp" width="11" height="11" viewBox="0 0 11 11"><circle cx="5.5" cy="5.5" r="4" fill="#fff" stroke="#b4b8bc" stroke-width="1"/><path d="M3 5.5h5M5.5 3v5" stroke="#707478" stroke-width="1"/></svg></span>
<span class="a" style="left:324px;top:660px"><svg class="ico" width="15" height="15" viewBox="0 0 15 15"><path d="M11 0.500l3.500 3.500l-3.500 3.500l-3.500-3.500z" fill="#f8dc50" stroke="#e8c030" stroke-width="0.600"/><path d="M8 3.500h-3.500v6" fill="none" stroke="#333" stroke-dasharray="1.500 1"/><rect x="0.500" y="9" width="8" height="5.500" rx="1" fill="#5f98d8" stroke="#3f70b0"/><path d="M2.500 10l2 2.500l2-2.500z" fill="#fff" stroke="#223" stroke-width="0.600"/></svg></span>
<span class="t R" style="left:346px;top:659px">Обработки</span>
<span class="a" style="left:63px;top:682px"><svg class="exp" width="11" height="11" viewBox="0 0 11 11"><circle cx="5.5" cy="5.5" r="4" fill="#fff" stroke="#b4b8bc" stroke-width="1"/><path d="M3 5.5h5M5.5 3v5" stroke="#707478" stroke-width="1"/></svg></span>
<span class="a" style="left:80px;top:681px"><svg class="chk" width="13" height="13" viewBox="0 0 13 13"><rect x="0.5" y="0.5" width="12" height="12" rx="2.2" ry="2.2" fill="#fff" stroke="#a69b72"/><path d="M3.2 6.2l2.2 2.600l4.400-5.200" fill="none" stroke="#1a1a1a" stroke-width="1.600"/></svg></span>
<span class="a" style="left:95px;top:682px"><svg class="ico" width="13" height="12" viewBox="0 0 13 12"><rect x="0.5" y="0.5" width="12" height="11" fill="#fbfcff" stroke="#8fa4c4"/><rect x="0.500" y="0.500" width="12" height="2" fill="#4a80c4" stroke="#4a80c4"/><path d="M3 4v6.500M5.200 4v6.500M7.400 4v6.500M9.600 4v6.500" stroke="#7f94bc" stroke-dasharray="1 1"/></svg></span>
<span class="t L" style="left:116px;top:678px">Планы видов характерис...</span>
<span class="a" style="left:307px;top:682px"><svg class="exp" width="11" height="11" viewBox="0 0 11 11"><circle cx="5.5" cy="5.5" r="4" fill="#fff" stroke="#b4b8bc" stroke-width="1"/><path d="M3 5.5h5M5.5 3v5" stroke="#707478" stroke-width="1"/></svg></span>
<span class="a" style="left:325px;top:682px"><svg class="ico" width="13" height="12" viewBox="0 0 13 12"><rect x="0.5" y="0.5" width="12" height="11" fill="#fbfcff" stroke="#8fa4c4"/><rect x="0.500" y="0.500" width="12" height="2" fill="#4a80c4" stroke="#4a80c4"/><path d="M3 4v6.500M5.200 4v6.500M7.400 4v6.500M9.600 4v6.500" stroke="#7f94bc" stroke-dasharray="1 1"/></svg></span>
<span class="t R" style="left:346px;top:678px">Планы видов характеристик</span>
<span class="a" style="left:63px;top:701px"><svg class="exp" width="11" height="11" viewBox="0 0 11 11"><circle cx="5.5" cy="5.5" r="4" fill="#fff" stroke="#b4b8bc" stroke-width="1"/><path d="M3 5.5h5M5.5 3v5" stroke="#707478" stroke-width="1"/></svg></span>
<span class="a" style="left:80px;top:700px"><svg class="chk" width="13" height="13" viewBox="0 0 13 13"><rect x="0.5" y="0.5" width="12" height="12" rx="2.2" ry="2.2" fill="#fff" stroke="#a69b72"/><path d="M3.2 6.2l2.2 2.600l4.400-5.200" fill="none" stroke="#1a1a1a" stroke-width="1.600"/></svg></span>
<span class="a" style="left:95px;top:700px"><svg class="ico" width="14" height="14" viewBox="0 0 14 14"><path d="M1 2h8M5 2v8M6.500 5.500h7M10 5.500v8" stroke="#4f92d4" stroke-width="2" fill="none"/></svg></span>
<span class="t L" style="left:116px;top:697px">Планы счетов</span>
<span class="a" style="left:307px;top:701px"><svg class="exp" width="11" height="11" viewBox="0 0 11 11"><circle cx="5.5" cy="5.5" r="4" fill="#fff" stroke="#b4b8bc" stroke-width="1"/><path d="M3 5.5h5M5.5 3v5" stroke="#707478" stroke-width="1"/></svg></span>
<span class="a" style="left:325px;top:700px"><svg class="ico" width="14" height="14" viewBox="0 0 14 14"><path d="M1 2h8M5 2v8M6.500 5.500h7M10 5.500v8" stroke="#4f92d4" stroke-width="2" fill="none"/></svg></span>
<span class="t R" style="left:346px;top:697px">Планы счетов</span>
<span class="a" style="left:63px;top:720px"><svg class="exp" width="11" height="11" viewBox="0 0 11 11"><circle cx="5.5" cy="5.5" r="4" fill="#fff" stroke="#b4b8bc" stroke-width="1"/><path d="M3 5.5h5M5.5 3v5" stroke="#707478" stroke-width="1"/></svg></span>
<span class="a" style="left:80px;top:719px"><svg class="chk" width="13" height="13" viewBox="0 0 13 13"><rect x="0.5" y="0.5" width="12" height="12" rx="2.2" ry="2.2" fill="#fff" stroke="#a69b72"/><path d="M3.2 6.2l2.2 2.600l4.400-5.200" fill="none" stroke="#1a1a1a" stroke-width="1.600"/></svg></span>
<span class="a" style="left:95px;top:719px"><svg class="ico" width="13" height="13" viewBox="0 0 13 13"><rect x="0.5" y="0.5" width="12" height="12" fill="#fbfcff" stroke="#8fa4c4"/><rect x="0.500" y="0.500" width="12" height="3" fill="#6fb05f"/><rect x="4.500" y="6.500" width="4" height="3" fill="#7fc070"/><path d="M0.500 3.500h12M0.500 6.500h12M0.500 9.500h12M4.500 0.500v12M8.500 0.500v12" stroke="#8fa4c4" /></svg></span>
<span class="t L" style="left:116px;top:716px;letter-spacing:0.082px">Регистры сведений</span>
<span class="a" style="left:307px;top:720px"><svg class="exp" width="11" height="11" viewBox="0 0 11 11"><circle cx="5.5" cy="5.5" r="4" fill="#fff" stroke="#b4b8bc" stroke-width="1"/><path d="M3 5.5h5M5.5 3v5" stroke="#707478" stroke-width="1"/></svg></span>
<span class="a" style="left:325px;top:719px"><svg class="ico" width="13" height="13" viewBox="0 0 13 13"><rect x="0.5" y="0.5" width="12" height="12" fill="#fbfcff" stroke="#8fa4c4"/><rect x="0.500" y="0.500" width="12" height="3" fill="#6fb05f"/><rect x="4.500" y="6.500" width="4" height="3" fill="#7fc070"/><path d="M0.500 3.500h12M0.500 6.500h12M0.500 9.500h12M4.500 0.500v12M8.500 0.500v12" stroke="#8fa4c4" /></svg></span>
<span class="t R" style="left:346px;top:716px;letter-spacing:0.100px">Регистры сведений</span>
<span class="a" style="left:63px;top:739px"><svg class="exp" width="11" height="11" viewBox="0 0 11 11"><circle cx="5.5" cy="5.5" r="4" fill="#fff" stroke="#b4b8bc" stroke-width="1"/><path d="M3 5.5h5M5.5 3v5" stroke="#707478" stroke-width="1"/></svg></span>
<span class="a" style="left:80px;top:738px"><svg class="chk" width="13" height="13" viewBox="0 0 13 13"><rect x="0.5" y="0.5" width="12" height="12" rx="2.2" ry="2.2" fill="#fff" stroke="#a69b72"/><path d="M3.2 6.2l2.2 2.600l4.400-5.200" fill="none" stroke="#1a1a1a" stroke-width="1.600"/></svg></span>
<span class="a" style="left:95px;top:737px"><svg class="ico" width="13" height="14" viewBox="0 0 13 14"><rect x="0.5" y="0.5" width="12" height="13" fill="#f6f8fc" stroke="#9fb8d8"/><ellipse cx="6.500" cy="9" rx="4.200" ry="1.700" fill="#f0b020" stroke="#d89818" stroke-width="0.600"/><ellipse cx="6.500" cy="7" rx="4.200" ry="1.700" fill="#f8c830" stroke="#d89818" stroke-width="0.600"/><ellipse cx="6.500" cy="5" rx="4.200" ry="1.700" fill="#fbdc58" stroke="#d89818" stroke-width="0.600"/></svg></span>
<span class="t L" style="left:116px;top:735px;letter-spacing:0.100px">Регистры накопления</span>
<span class="a" style="left:307px;top:739px"><svg class="exp" width="11" height="11" viewBox="0 0 11 11"><circle cx="5.5" cy="5.5" r="4" fill="#fff" stroke="#b4b8bc" stroke-width="1"/><path d="M3 5.5h5M5.5 3v5" stroke="#707478" stroke-width="1"/></svg></span>
<span class="a" style="left:325px;top:737px"><svg class="ico" width="13" height="14" viewBox="0 0 13 14"><rect x="0.5" y="0.5" width="12" height="13" fill="#f6f8fc" stroke="#9fb8d8"/><ellipse cx="6.500" cy="9" rx="4.200" ry="1.700" fill="#f0b020" stroke="#d89818" stroke-width="0.600"/><ellipse cx="6.500" cy="7" rx="4.200" ry="1.700" fill="#f8c830" stroke="#d89818" stroke-width="0.600"/><ellipse cx="6.500" cy="5" rx="4.200" ry="1.700" fill="#fbdc58" stroke="#d89818" stroke-width="0.600"/></svg></span>
<span class="t R" style="left:346px;top:735px;letter-spacing:0.100px">Регистры накопления</span>
<span class="a" style="left:63px;top:758px"><svg class="exp" width="11" height="11" viewBox="0 0 11 11"><circle cx="5.5" cy="5.5" r="4" fill="#fff" stroke="#b4b8bc" stroke-width="1"/><path d="M3 5.5h5M5.5 3v5" stroke="#707478" stroke-width="1"/></svg></span>
<span class="a" style="left:80px;top:757px"><svg class="chk" width="13" height="13" viewBox="0 0 13 13"><rect x="0.5" y="0.5" width="12" height="12" rx="2.2" ry="2.2" fill="#fff" stroke="#a69b72"/><path d="M3.2 6.2l2.2 2.600l4.400-5.200" fill="none" stroke="#1a1a1a" stroke-width="1.600"/></svg></span>
<span class="a" style="left:95px;top:756px"><svg class="ico" width="13" height="14" viewBox="0 0 13 14"><rect x="0.5" y="0.5" width="12" height="13" fill="#e4eef9" stroke="#8fb0d4"/><path d="M2 3.500h5.500M4.700 3.500v6M6 6h5M8.600 6v6" stroke="#3f80c8" stroke-width="1.600" fill="none"/></svg></span>
<span class="t L" style="left:116px;top:754px">Регистры бухгалтерии</span>
<span class="a" style="left:307px;top:758px"><svg class="exp" width="11" height="11" viewBox="0 0 11 11"><circle cx="5.5" cy="5.5" r="4" fill="#fff" stroke="#b4b8bc" stroke-width="1"/><path d="M3 5.5h5M5.5 3v5" stroke="#707478" stroke-width="1"/></svg></span>
<span class="a" style="left:325px;top:756px"><svg class="ico" width="13" height="14" viewBox="0 0 13 14"><rect x="0.5" y="0.5" width="12" height="13" fill="#e4eef9" stroke="#8fb0d4"/><path d="M2 3.500h5.500M4.700 3.500v6M6 6h5M8.600 6v6" stroke="#3f80c8" stroke-width="1.600" fill="none"/></svg></span>
<span class="t R" style="left:346px;top:754px">Регистры бухгалтерии</span>
<div class="vs" style="left:37px"></div><div class="vs" style="left:257px"></div><div class="vs" style="left:281px"></div><div class="vs" style="left:643px"></div><div class="vs" style="left:810px"></div>
<div id="sb"></div><div id="sbup"></div><div id="thumb"></div><div style="position:absolute;left:1193px;top:668px;width:3px;height:4px;border:1px solid #cfc6a0;border-right:none;box-sizing:border-box;border-radius:1px 0 0 1px"></div>
<svg class="a" style="left:1191px;top:36px" width="8" height="7" viewBox="0 0 8 7"><path d="M4 0l3.700 7h-7.400z" fill="#8f8a94"/></svg>
<svg class="a" style="left:1191px;top:766px" width="8" height="6" viewBox="0 0 8 6"><path d="M4 6l3.700-6h-7.400z" fill="#c2c0b6"/></svg>
<span class="lbl" style="left:42px;top:787px;color:#333">Поставщик:</span>
<div style="position:absolute;left:105px;top:785px;width:1093px;height:19px;box-sizing:border-box;border:1px solid #c3b98f;border-radius:3px;background:#fdfbee"></div>
<span class="lbl" style="left:109px;top:787px">Изменения разрешены</span>
<span class="lbl grp" style="left:13px;top:808px">Статусы по соответствиям объектов</span><div class="hl" style="left:203px;top:815px;width:1000px"></div>
<div class="lb" style="left:19px;top:824px;background:#fff"></div><span class="lbl" style="left:37px;top:826px;letter-spacing:-0.25px">Совпадающие</span>
<div class="lb" style="left:120px;top:824px;background:#ddfcfd"></div><span class="lbl" style="left:138px;top:826px">Различающиеся</span>
<div class="lb" style="left:232px;top:824px;background:#d5d3db"></div><span class="lbl" style="left:250px;top:826px">Неопределенные</span>
<div class="lb" style="left:346px;top:824px;background:#fbdcc5"></div><span class="lbl" style="left:364px;top:826px">В основной</span>
<div class="lb" style="left:438px;top:824px;background:#b0d4b9"></div><span class="lbl" style="left:457px;top:826px">В новой конфигу...</span>
<div class="lb" style="left:557px;top:823px;width:16px;height:16px;border-color:#b8b8b0"></div><span class="a" style="left:558px;top:825px"><svg class="ord" width="14" height="12" viewBox="0 0 14 12"><path d="M3.500 0.500v9M10.500 2v9" fill="none" stroke="#6a6a6a" stroke-width="1"/><path d="M1.500 7.800h4l-2 3zM8.500 3.700h4l-2-3z" fill="#5e5e5e"/></svg></span><span class="lbl" style="left:577.5px;top:826px">Изменен порядок</span>
<span class="lbl grp" style="left:13px;top:846px">Статусы по истории объектов</span><div class="hl" style="left:167px;top:853px;width:1036px"></div>
<div class="lb" style="left:20px;top:863px;width:14px;height:14px;background:#fdfbee"></div><span class="lbl" style="left:37px;top:864px">Неизмененные</span>
<span class="a" style="left:121px;top:863px"><svg class="st" width="14" height="14" viewBox="0 0 14 14"><rect x="0.5" y="0.5" width="13" height="13" fill="#fff" stroke="#c8c8c8"/><path d="M5.200 1.900L11 7.500L7.300 11L1.800 5.400z" fill="url(#pg)" stroke="#2a7a18" stroke-width="0.5"/><path d="M11 7.500l0.700 0.700l-3.800 3.400l-0.600-0.600z" fill="#dcf8c8"/><path d="M11.700 8.600v3.200l-3.400-0.200z" fill="#1e5a10"/></svg></span><span class="lbl" style="left:138px;top:864px">Измененные</span>
<div class="lb" style="left:233px;top:863px;width:14px;height:14px;background:#fdfbee;text-align:center;line-height:12px;font-weight:bold;color:#5c4e3a">?</div><span class="lbl" style="left:250px;top:864px">Неопределенные</span>
<span class="a" style="left:347px;top:863px"><svg class="st" width="14" height="14" viewBox="0 0 14 14"><rect x="0.5" y="0.5" width="13" height="13" fill="#fff" stroke="#c8c8c8"/><path d="M3 7h8M7 3v8" stroke="#2f961f" stroke-width="2"/></svg></span><span class="lbl" style="left:364px;top:864px">Добавленные</span>
<span class="a" style="left:439px;top:863px"><svg class="st" width="14" height="14" viewBox="0 0 14 14"><rect x="0.5" y="0.5" width="13" height="13" fill="#fff" stroke="#c8c8c8"/><path d="M3 7h8" stroke="#d42020" stroke-width="2"/></svg></span><span class="lbl" style="left:457px;top:864px">Удаленные</span>
<div class="lb" style="left:558px;top:863px;width:14px;height:14px;border-color:#c4c4bc"></div><span class="a" style="left:558px;top:864px"><svg class="ord" width="14" height="12" viewBox="0 0 14 12"><path d="M3.500 0.500v9M10.500 2v9" fill="none" stroke="#6a6a6a" stroke-width="1"/><path d="M1.500 7.800h4l-2 3zM8.500 3.700h4l-2-3z" fill="#5e5e5e"/></svg></span><span class="lbl" style="left:577.5px;top:864px">Изменен порядок</span>
<div class="btn" style="left:619px;width:80px;text-align:left;padding-left:7px">Действия<svg style="position:absolute;left:68px;top:8px" width="8" height="4" viewBox="0 0 8 4"><path d="M0.500 0h7l-3.500 3.700z" fill="#a8a498"/></svg></div>
<div class="btn" style="left:703px;width:80px">Фильтр</div>
<div class="btn" style="left:787px;width:80px">Настройка</div>
<div class="btn" style="left:871px;width:80px;color:#d4c8a4">Обновить</div>
<div class="btn" style="left:955px;width:80px">Выполнить</div>
<div class="btn" style="left:1039px;width:80px;border-color:#a89c6c;box-shadow:inset 0 0 0 1px #e0d6ae">Закрыть</div>
<div class="btn" style="left:1123px;width:80px">Справка</div>
<div style="position:absolute;left:0;top:934px;width:1109px;height:1px;background:#f9f6ea"></div>
<div style="position:absolute;left:1114px;top:934px;width:29px;height:4px;border:1px solid #f9f6ea;box-sizing:border-box"></div>
<div style="position:absolute;left:1148px;top:934px;width:33px;height:4px;border:1px solid #f9f6ea;box-sizing:border-box"></div>
<div style="position:absolute;left:1186px;top:934px;width:30px;height:4px;border:1px solid #f9f6ea;box-sizing:border-box"></div>
</body></html>
